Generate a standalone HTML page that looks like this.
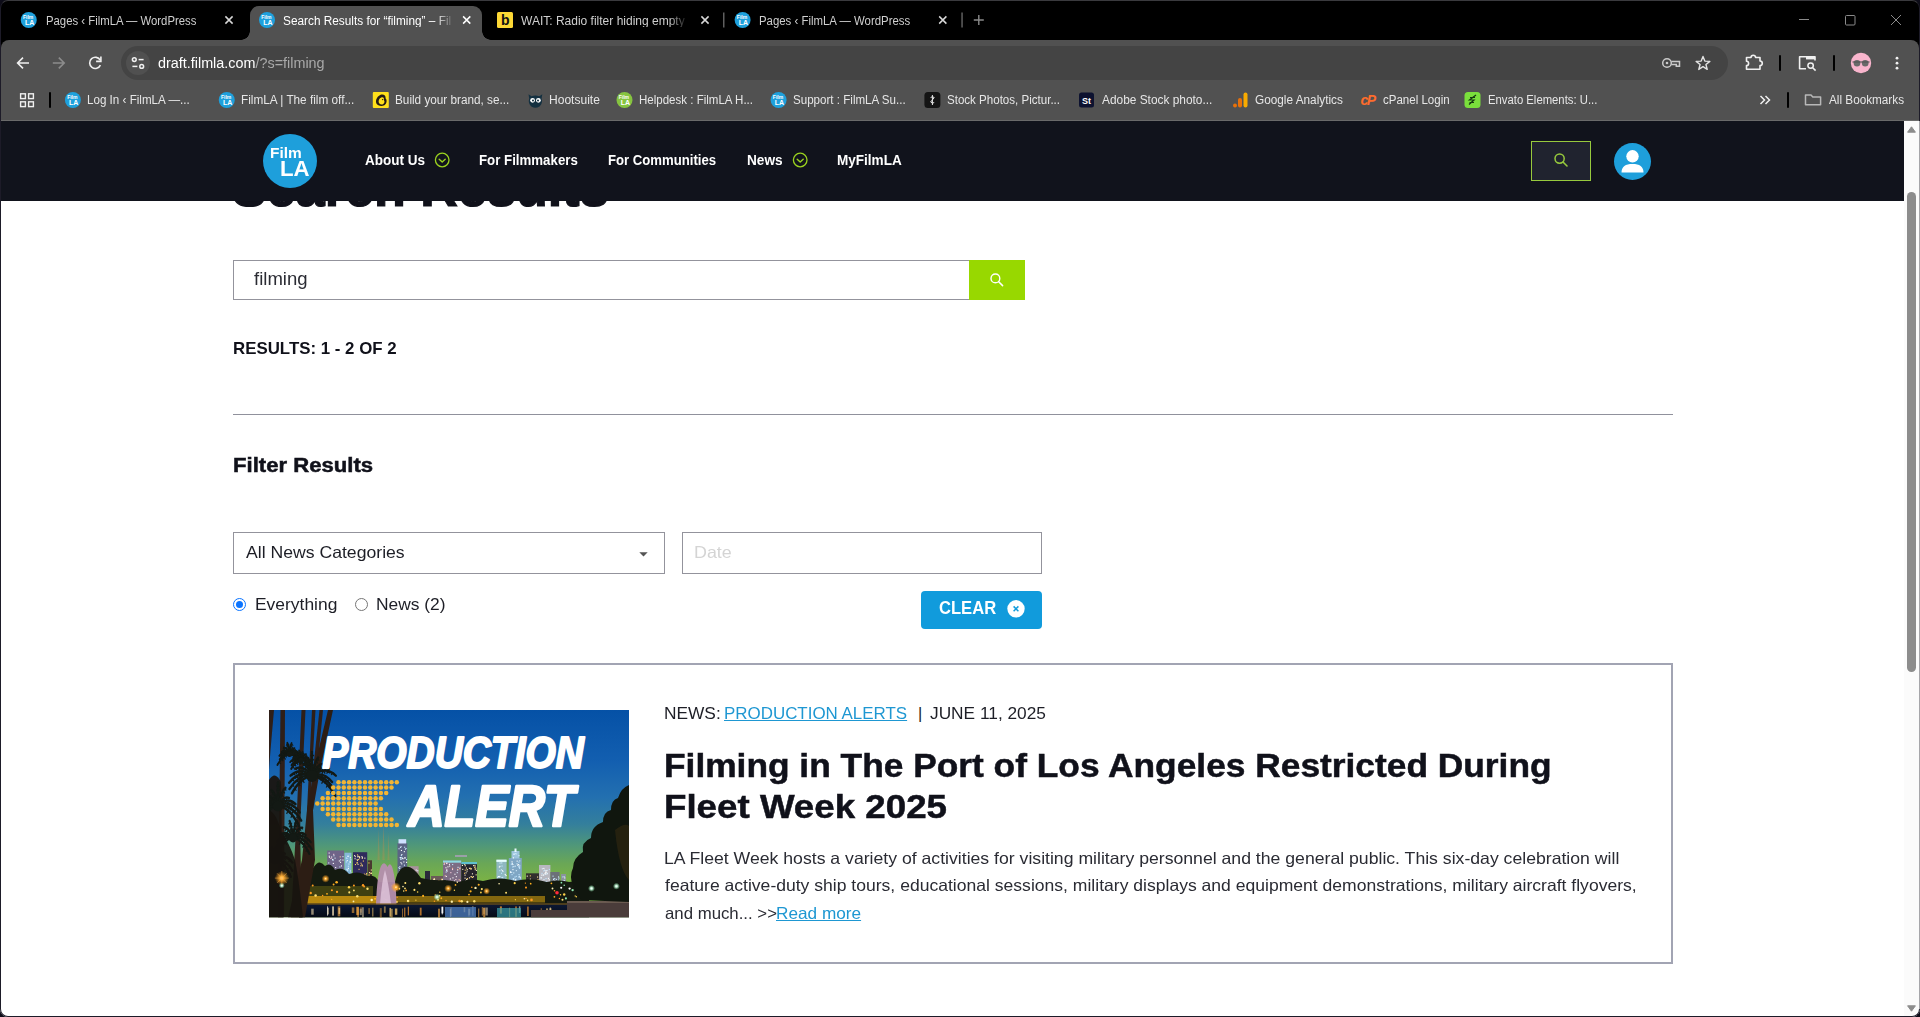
<!DOCTYPE html>
<html lang="en">
<head>
<meta charset="utf-8">
<title>Search Results for "filming" – FilmLA</title>
<style>
*{box-sizing:border-box;margin:0;padding:0}
html,body{width:1920px;height:1017px;overflow:hidden;background:#fff}
body{font-family:"Liberation Sans",sans-serif;position:relative;color:#10111a}
.abs{position:absolute}
.t{position:absolute;white-space:nowrap;line-height:1;transform-origin:0 0;z-index:5}
svg{position:absolute;overflow:visible}
a{color:inherit}
/* ---------- browser chrome ---------- */
#tabstrip{left:0;top:0;width:1920px;height:52px;background:#000}
#toolbar{left:1px;top:40px;width:1918px;height:80px;background:#515151;border-radius:8px 8px 0 0}
#activetab{left:250px;top:6px;width:232px;height:34px;background:#515151;border-radius:9px 9px 0 0}
#activetab:before,#activetab:after{content:"";position:absolute;bottom:0;width:9px;height:9px;background:radial-gradient(circle at 0 0,rgba(0,0,0,0) 8.5px,#515151 9px)}
#activetab:before{left:-9px}
#activetab:after{right:-9px;background:radial-gradient(circle at 100% 0,rgba(0,0,0,0) 8.5px,#515151 9px)}
#omni{left:121px;top:46px;width:1606.5px;height:34px;border-radius:17px;background:#444}
#omnicirc{left:126px;top:51px;width:24px;height:24px;border-radius:12px;background:#505050}
#chromeline{left:0;top:120px;width:1920px;height:1px;background:#6a6a6a}
.sep{position:absolute;width:2px;background:#000;border-radius:1px}
.tsep{position:absolute;width:1px;background:#666}
.fav{position:absolute;width:16px;height:16px;border-radius:8px;background:#1ea0dc}
/* ---------- site ---------- */
#sitehead{left:0;top:121px;width:1904px;height:79.5px;background:#11131c;z-index:2}
#scroll{left:1904px;top:121px;width:15px;height:895px;background:#fbfbfb;z-index:6}
#frame{left:0;top:0;width:1920px;height:1017px;border:1px solid #1d1b28;border-top-color:#3a3a3e;border-radius:8px;box-shadow:0 0 0 12px #0d0c18;z-index:30;pointer-events:none}
#rborder{left:1919px;top:121px;width:1px;height:888px;background:#a6a6aa;z-index:31}
.fade{-webkit-mask-image:linear-gradient(to right,#000 0,#000 90%,rgba(0,0,0,0.15) 100%);mask-image:linear-gradient(to right,#000 0,#000 90%,rgba(0,0,0,0.15) 100%)}
#thumb{left:1907px;top:192px;width:9px;height:480px;border-radius:5px;background:#8c8c8c;z-index:7}
.box{position:absolute;border:1px solid #93939c;background:#fff}
</style>
</head>
<body>
<!-- browser chrome -->
<div class="abs" id="tabstrip"></div>
<div class="abs" id="toolbar"></div>
<div class="abs" id="activetab"></div>
<div class="abs" id="omni"></div>
<div class="abs" id="omnicirc"></div>
<div class="abs" id="chromeline"></div>
<svg style="left:0;top:0;z-index:4" width="1920" height="121" viewBox="0 0 1920 121" font-family="Liberation Sans, sans-serif">
<g><circle cx="28.75" cy="20" r="8" fill="#1ea0dc"/><text x="28.15" y="19.4" font-size="5" font-weight="bold" fill="#fff" text-anchor="middle">Film</text><text x="29.55" y="25.2" font-size="7" font-weight="bold" fill="#fff" text-anchor="middle">LA</text></g>
<g><circle cx="267" cy="20" r="8" fill="#1ea0dc"/><text x="266.4" y="19.4" font-size="5" font-weight="bold" fill="#fff" text-anchor="middle">Film</text><text x="267.8" y="25.2" font-size="7" font-weight="bold" fill="#fff" text-anchor="middle">LA</text></g>
<g><circle cx="742.6" cy="20" r="8" fill="#1ea0dc"/><text x="742.0" y="19.4" font-size="5" font-weight="bold" fill="#fff" text-anchor="middle">Film</text><text x="743.4" y="25.2" font-size="7" font-weight="bold" fill="#fff" text-anchor="middle">LA</text></g>
<rect x="497" y="12" width="16" height="16" rx="1.5" fill="#fdd835"/><text x="505.2" y="25" font-size="14" font-weight="bold" fill="#111" text-anchor="middle">b</text>
<path d="M225.4 16.4 L232.6 23.6 M232.6 16.4 L225.4 23.6" stroke="#d8d8d8" stroke-width="1.5" fill="none"/>
<path d="M463.09999999999997 16.4 L470.3 23.6 M470.3 16.4 L463.09999999999997 23.6" stroke="#fff" stroke-width="1.5" fill="none"/>
<path d="M701.4 16.4 L708.6 23.6 M708.6 16.4 L701.4 23.6" stroke="#d8d8d8" stroke-width="1.5" fill="none"/>
<path d="M939.1999999999999 16.4 L946.4 23.6 M946.4 16.4 L939.1999999999999 23.6" stroke="#d8d8d8" stroke-width="1.5" fill="none"/>
<rect x="723" y="12.5" width="1.5" height="15" fill="#5f5f5f"/><rect x="961.3" y="12.5" width="1.5" height="15" fill="#5f5f5f"/>
<path d="M973.8 20 H983.8 M978.8 15 V25" stroke="#8a8a8a" stroke-width="1.4"/>
<path d="M1799 19.5 H1809" stroke="#8a8a8a" stroke-width="1"/>
<rect x="1845.5" y="15.5" width="9.5" height="9.5" rx="1" fill="none" stroke="#8a8a8a" stroke-width="1"/>
<path d="M1891 15 L1901 25 M1901 15 L1891 25" stroke="#8a8a8a" stroke-width="1"/>
<path d="M29 63 H18 M23 57.6 L17.6 63 L23 68.4" stroke="#f0f0f0" stroke-width="1.6" fill="none" stroke-linejoin="miter"/>
<path d="M52.8 63 H63.8 M58.8 57.6 L64.2 63 L58.8 68.4" stroke="#8c8c8c" stroke-width="1.6" fill="none"/>
<path d="M100.2 60.2 A5.6 5.6 0 1 0 100.4 65.2" stroke="#f0f0f0" stroke-width="1.6" fill="none"/><path d="M100.9 56.6 V61.4 H96.1" stroke="#f0f0f0" stroke-width="1.6" fill="none"/>
<g stroke="#f0f0f0" stroke-width="1.5" fill="none"><circle cx="134.3" cy="59.6" r="1.9"/><path d="M138.6 59.6 H143.6"/><circle cx="141.7" cy="66.4" r="1.9"/><path d="M132.4 66.4 H137.4"/></g>
<g stroke="#c9c9c9" stroke-width="1.5" fill="none"><circle cx="1667" cy="63" r="4.3"/><path d="M1671.3 61.6 H1679.5 V66.2 H1676.3 V64.6 H1671.3"/></g><circle cx="1667" cy="63" r="1.3" fill="#c9c9c9"/>
<polygon points="1703.00,56.40 1704.82,61.09 1709.85,61.38 1705.95,64.56 1707.23,69.42 1703.00,66.70 1698.77,69.42 1700.05,64.56 1696.15,61.38 1701.18,61.09" fill="none" stroke="#e3e3e3" stroke-width="1.4" stroke-linejoin="round"/>
<path d="M1746.5 57.5 H1751 A2.3 2.3 0 0 1 1755.6 57.5 H1760 V61 A2.3 2.3 0 0 1 1760 65.6 V69.3 H1746.5 V65.5 A2.1 2.1 0 0 0 1746.5 61.3 Z" stroke="#f0f0f0" stroke-width="1.6" fill="none" stroke-linejoin="round"/>
<rect x="1779" y="55" width="2" height="16" rx="1" fill="#000"/><rect x="1833" y="55" width="2" height="16" rx="1" fill="#000"/>
<path d="M1806 68.8 H1799.6 V56.8 H1815 V60.5" stroke="#f0f0f0" stroke-width="1.6" fill="none" stroke-linejoin="round"/><rect x="1806" y="56.4" width="9" height="3" fill="#f0f0f0"/><circle cx="1810.6" cy="65.6" r="2.7" stroke="#f0f0f0" stroke-width="1.5" fill="none"/><path d="M1812.7 67.7 L1815.6 70.6" stroke="#f0f0f0" stroke-width="1.6"/>
<circle cx="1861" cy="63" r="10.2" fill="#f9b5cd"/><circle cx="1857" cy="63.3" r="3.3" fill="#6a6a6a"/><circle cx="1865.2" cy="63.3" r="3.3" fill="#6a6a6a"/><path d="M1852.5 62 H1869.5" stroke="#555" stroke-width="1.2"/>
<circle cx="1897" cy="58.2" r="1.4" fill="#f0f0f0"/><circle cx="1897" cy="63.2" r="1.4" fill="#f0f0f0"/><circle cx="1897" cy="68.2" r="1.4" fill="#f0f0f0"/>
<g stroke="#f0f0f0" stroke-width="1.4" fill="none"><rect x="20.6" y="93.8" width="4.8" height="4.8"/><rect x="28.6" y="93.8" width="4.8" height="4.8"/><rect x="20.6" y="101.8" width="4.8" height="4.8"/><rect x="28.6" y="101.8" width="4.8" height="4.8"/></g>
<rect x="49" y="92" width="2" height="16" rx="1" fill="#000"/><rect x="1787" y="92" width="2" height="16" rx="1" fill="#000"/>
<g><circle cx="72.9" cy="100" r="8" fill="#1ea0dc"/><text x="72.30000000000001" y="99.4" font-size="5" font-weight="bold" fill="#fff" text-anchor="middle">Film</text><text x="73.7" y="105.2" font-size="7" font-weight="bold" fill="#fff" text-anchor="middle">LA</text></g>
<g><circle cx="226.75" cy="100" r="8" fill="#1ea0dc"/><text x="226.15" y="99.4" font-size="5" font-weight="bold" fill="#fff" text-anchor="middle">Film</text><text x="227.55" y="105.2" font-size="7" font-weight="bold" fill="#fff" text-anchor="middle">LA</text></g>
<g><circle cx="624.5" cy="100" r="8" fill="#86c440"/><text x="623.9" y="99.4" font-size="5" font-weight="bold" fill="#fff" text-anchor="middle">Film</text><text x="625.3" y="105.2" font-size="7" font-weight="bold" fill="#fff" text-anchor="middle">LA</text></g>
<g><circle cx="778.6" cy="100" r="8" fill="#1ea0dc"/><text x="778.0" y="99.4" font-size="5" font-weight="bold" fill="#fff" text-anchor="middle">Film</text><text x="779.4" y="105.2" font-size="7" font-weight="bold" fill="#fff" text-anchor="middle">LA</text></g>
<rect x="372.8" y="92" width="16" height="16" rx="1" fill="#ffe01b"/><path d="M377.2 104.6 C374.8 102.4 376 96.8 380.6 94.8 C383.6 93.8 386 95.6 385.6 98.4 C387.2 99.6 387 103.6 384.4 105.2 C382.2 106.4 378.8 106.2 377.2 104.6 Z" fill="#241c15"/><path d="M379.4 103.6 C377.8 101.6 379 98 381.8 97.2 C383.6 97 384.4 98.4 383.8 100 C385 101 384.6 103.4 383 104.2 C381.8 104.8 380.2 104.6 379.4 103.6 Z" fill="#ffe01b"/><circle cx="382.6" cy="99.6" r="0.7" fill="#241c15"/>
<path d="M528.5 94.2 L531.5 96.2 Q535.4 94.6 539.3 96.2 L542.3 94.2 L541.6 98.5 Q543 103 539.5 106.5 Q535.4 109 531.3 106.5 Q527.8 103 529.2 98.5 Z" fill="#143040"/><circle cx="532.6" cy="100.3" r="2.4" fill="#fff"/><circle cx="538.4" cy="100.3" r="2.4" fill="#fff"/><circle cx="533" cy="100.5" r="1" fill="#143040"/><circle cx="538" cy="100.5" r="1" fill="#143040"/>
<rect x="924.4" y="92" width="16" height="16" rx="3.5" fill="#141414"/><path d="M932.4 95 V105 M930.6 97.5 Q932.4 96 934.2 97.5 Q932.4 100 930.6 102 Q932.4 104 934.2 102.5" stroke="#e8e8e8" stroke-width="1" fill="none"/>
<rect x="1079" y="92.5" width="15" height="15" rx="2.5" fill="#0d1230"/><text x="1086.5" y="103.6" font-size="9" font-weight="bold" fill="#fff" text-anchor="middle">St</text>
<rect x="1243.5" y="92.5" width="4" height="15" rx="2" fill="#f9ab00"/><rect x="1238" y="98" width="4" height="9.5" rx="2" fill="#e8710a"/><circle cx="1235" cy="105.5" r="2" fill="#e8710a"/>
<text x="1367.5" y="105" font-size="14" font-weight="bold" font-style="italic" fill="#ff6c2c" text-anchor="middle" letter-spacing="-1.5">cP</text>
<rect x="1464.5" y="92" width="16" height="16" rx="3.5" fill="#7adf3c"/><path d="M1476 95 L1469.5 100 H1474 L1469 104.5 M1470 97.5 H1475 M1469.5 102.5 H1474" stroke="#143a10" stroke-width="1.2" fill="none"/>
<path d="M1760.5 96 L1764.5 100 L1760.5 104 M1765.5 96 L1769.5 100 L1765.5 104" stroke="#f0f0f0" stroke-width="1.5" fill="none"/>
<path d="M1805.5 104.8 V95 H1811 L1812.8 97 H1820.6 V104.8 Z" stroke="#b8b8b8" stroke-width="1.5" fill="none" stroke-linejoin="round"/>
</svg>
<span class="t" style="left:45.70px;top:15px;font-size:12px;color:#cfcfcf;transform:scaleX(0.9451);">Pages ‹ FilmLA — WordPress</span>
<span class="t fade" style="left:282.50px;top:15px;font-size:12px;color:#fff;transform:scaleX(0.9850);">Search Results for “filming” – Fil</span>
<span class="t fade" style="left:521.30px;top:15px;font-size:12px;color:#cfcfcf;transform:scaleX(1.0005);">WAIT: Radio filter hiding empty</span>
<span class="t" style="left:759.00px;top:15px;font-size:12px;color:#cfcfcf;transform:scaleX(0.9498);">Pages ‹ FilmLA — WordPress</span>
<span class="t" style="left:158.00px;top:56px;font-size:14px;color:#fff;transform:scaleX(1.0268);">draft.filmla.com<span style="color:#a9a9a9">/?s=filming</span></span>
<span class="t" style="left:87.00px;top:94px;font-size:12px;color:#e6e6e6;transform:scaleX(0.9684);">Log In ‹ FilmLA —...</span>
<span class="t" style="left:241.25px;top:94px;font-size:12px;color:#e6e6e6;transform:scaleX(0.9813);">FilmLA | The film off...</span>
<span class="t" style="left:395.00px;top:94px;font-size:12px;color:#e6e6e6;transform:scaleX(0.9794);">Build your brand, se...</span>
<span class="t" style="left:549.40px;top:94px;font-size:12px;color:#e6e6e6;transform:scaleX(1.0035);">Hootsuite</span>
<span class="t" style="left:639.00px;top:94px;font-size:12px;color:#e6e6e6;transform:scaleX(0.9602);">Helpdesk : FilmLA H...</span>
<span class="t" style="left:792.70px;top:94px;font-size:12px;color:#e6e6e6;transform:scaleX(0.9654);">Support : FilmLA Su...</span>
<span class="t" style="left:947.30px;top:94px;font-size:12px;color:#e6e6e6;transform:scaleX(0.9628);">Stock Photos, Pictur...</span>
<span class="t" style="left:1101.50px;top:94px;font-size:12px;color:#e6e6e6;transform:scaleX(0.9903);">Adobe Stock photo...</span>
<span class="t" style="left:1255.00px;top:94px;font-size:12px;color:#e6e6e6;transform:scaleX(0.9828);">Google Analytics</span>
<span class="t" style="left:1382.50px;top:94px;font-size:12px;color:#e6e6e6;transform:scaleX(0.9605);">cPanel Login</span>
<span class="t" style="left:1487.50px;top:94px;font-size:12px;color:#e6e6e6;transform:scaleX(0.9420);">Envato Elements: U...</span>
<span class="t" style="left:1829.00px;top:94px;font-size:12px;color:#e6e6e6;transform:scaleX(0.9780);">All Bookmarks</span>

<!-- page -->
<div class="abs" id="sitehead"></div>
<!-- logo -->
<div class="abs" style="left:262.9px;top:133.9px;width:54.2px;height:54.2px;border-radius:50%;background:#1e9fdb;z-index:3"></div>
<!-- nav chevrons -->
<svg style="left:434px;top:152px;z-index:3" width="16" height="16" viewBox="0 0 16 16"><circle cx="8.2" cy="8" r="6.8" fill="none" stroke="#9bd21f" stroke-width="1.3"/><path d="M5.2 7.2 L8.2 10 L11.2 7.2" fill="none" stroke="#9bd21f" stroke-width="1.4" stroke-linecap="round" stroke-linejoin="round"/></svg>
<svg style="left:792px;top:152px;z-index:3" width="16" height="16" viewBox="0 0 16 16"><circle cx="8.2" cy="8" r="6.8" fill="none" stroke="#9bd21f" stroke-width="1.3"/><path d="M5.2 7.2 L8.2 10 L11.2 7.2" fill="none" stroke="#9bd21f" stroke-width="1.4" stroke-linecap="round" stroke-linejoin="round"/></svg>
<!-- header search button -->
<div class="abs" style="left:1531px;top:141px;width:60px;height:40px;border:1px solid #97c93d;background:#20232f;z-index:3"></div>
<svg style="left:1553px;top:152px;z-index:4" width="16" height="16" viewBox="0 0 16 16"><circle cx="6.6" cy="6.6" r="4.6" fill="none" stroke="#97c93d" stroke-width="1.5"/><path d="M10 10 L14 14" stroke="#97c93d" stroke-width="1.6" stroke-linecap="round"/></svg>
<!-- user icon -->
<div class="abs" style="left:1613.5px;top:142.5px;width:37px;height:37px;border-radius:50%;background:#1e9fdb;z-index:3;overflow:hidden"></div>
<svg style="left:1613.5px;top:142.5px;z-index:4" width="37" height="37" viewBox="0 0 37 37"><circle cx="18.5" cy="13.3" r="6.2" fill="#fff"/><path d="M7.5 29.5 C7.5 23.5 11.5 21 18.5 21 C25.5 21 29.5 23.5 29.5 29.5 Z" fill="#fff"/></svg>
<!-- scrollbar -->
<div class="abs" id="scroll"></div>
<div class="abs" id="thumb"></div>
<svg style="left:1904px;top:121px;z-index:7" width="15" height="895" viewBox="0 0 15 895"><path d="M3.6 11.2 L7.5 5.8 L11.4 11.2 Z" fill="#8c8c8c" stroke="#8c8c8c" stroke-width="1" stroke-linejoin="round"/><path d="M3.6 884.8 L7.5 890.2 L11.4 884.8 Z" fill="#8c8c8c" stroke="#8c8c8c" stroke-width="1" stroke-linejoin="round"/></svg>
<div class="abs" id="rborder"></div>
<div class="abs" id="frame"></div>
<!-- search form -->
<div class="box" style="left:233px;top:260px;width:737px;height:40px"></div>
<div class="abs" style="left:969px;top:260px;width:56px;height:40px;background:#98d800"></div>
<svg style="left:989px;top:272px" width="16" height="16" viewBox="0 0 16 16"><circle cx="6.4" cy="6.4" r="4.4" fill="none" stroke="#fff" stroke-width="1.4"/><path d="M9.7 9.7 L13.6 13.6" stroke="#fff" stroke-width="1.5" stroke-linecap="round"/></svg>
<div class="abs" style="left:233px;top:414px;width:1440px;height:1px;background:#90919c"></div>
<!-- filters -->
<div class="box" style="left:233px;top:532px;width:432px;height:42px"></div>
<svg style="left:639px;top:552px" width="9" height="5" viewBox="0 0 9 5"><path d="M0.3 0.3 L8.7 0.3 L4.5 4.6 Z" fill="#555"/></svg>
<div class="box" style="left:682px;top:532px;width:360px;height:42px"></div>
<!-- radios -->
<div class="abs" style="left:232.5px;top:598px;width:13px;height:13px;border-radius:50%;border:1.2px solid #0b74ff;background:#fff"></div>
<div class="abs" style="left:235.5px;top:601px;width:7px;height:7px;border-radius:50%;background:#0b74ff"></div>
<div class="abs" style="left:354.7px;top:598px;width:13px;height:13px;border-radius:50%;border:1.2px solid #767676;background:#fff"></div>
<!-- clear -->
<div class="abs" style="left:921px;top:591px;width:121px;height:38px;border-radius:4px;background:#119bdc"></div>
<svg style="left:1006.5px;top:600px" width="18" height="18" viewBox="0 0 18 18"><circle cx="9" cy="8.8" r="8.7" fill="#fff"/><path d="M6.6 6.4 L11.4 11.2 M11.4 6.4 L6.6 11.2" stroke="#119bdc" stroke-width="1.5"/></svg>
<!-- card -->
<div class="abs" style="left:233px;top:663px;width:1440px;height:301px;border:2px solid #a2a4b3;background:#fff"></div>
<svg style="left:269px;top:710px" width="360" height="207.5" viewBox="0 0 360 207.5" font-family="Liberation Sans, sans-serif">
<defs>
<linearGradient id="sky" x1="0" y1="0" x2="0" y2="1">
<stop offset="0" stop-color="#0551a6"/><stop offset="0.25" stop-color="#135fb0"/><stop offset="0.42" stop-color="#2370b0"/>
<stop offset="0.55" stop-color="#347f9c"/><stop offset="0.65" stop-color="#4f977a"/><stop offset="0.74" stop-color="#6aa756"/><stop offset="0.82" stop-color="#7ab246"/><stop offset="1" stop-color="#7ab246"/></linearGradient>
<linearGradient id="water" x1="0" y1="0" x2="0" y2="1"><stop offset="0" stop-color="#0c1833"/><stop offset="1" stop-color="#050a14"/></linearGradient>
<radialGradient id="glowO"><stop offset="0" stop-color="#fff4d0"/><stop offset="0.25" stop-color="#ffb23a"/><stop offset="1" stop-color="#ff9a1a" stop-opacity="0"/></radialGradient>
<radialGradient id="glowW"><stop offset="0" stop-color="#ffffff"/><stop offset="0.3" stop-color="#c8f0d8"/><stop offset="1" stop-color="#7fe0a0" stop-opacity="0"/></radialGradient>
<clipPath id="imgclip"><rect width="360" height="207.5"/></clipPath>
</defs>
<g clip-path="url(#imgclip)">
<rect width="360" height="207.5" fill="url(#sky)"/>
<rect x="58.2" y="140.5" width="16.8" height="49.5" fill="#6f6488"/>
<rect x="63.7" y="149.5" width="1.1" height="1.1" fill="#bfe6ff"/>
<rect x="59.5" y="180.7" width="1.1" height="1.1" fill="#ffd0e0"/>
<rect x="64.4" y="145.2" width="1.1" height="1.1" fill="#d8f0ff"/>
<rect x="62.1" y="146.5" width="1.1" height="1.1" fill="#ffffff"/>
<rect x="59.9" y="146.7" width="1.1" height="1.1" fill="#ffffff"/>
<rect x="59.7" y="168.8" width="1.1" height="1.1" fill="#fff"/>
<rect x="68.4" y="169.6" width="1.1" height="1.1" fill="#ffd0e0"/>
<rect x="67.6" y="160.9" width="1.1" height="1.1" fill="#fff"/>
<rect x="59.5" y="182.4" width="1.1" height="1.1" fill="#ffc0a0"/>
<rect x="65.2" y="167.6" width="1.1" height="1.1" fill="#d8f0ff"/>
<rect x="63.5" y="180.4" width="1.1" height="1.1" fill="#fff"/>
<rect x="60.4" y="169.1" width="1.1" height="1.1" fill="#fff"/>
<rect x="64.5" y="168.0" width="1.1" height="1.1" fill="#ffd0e0"/>
<rect x="67.4" y="171.3" width="1.1" height="1.1" fill="#ffffff"/>
<rect x="69.1" y="162.4" width="1.1" height="1.1" fill="#ffc0a0"/>
<rect x="65.9" y="185.4" width="1.1" height="1.1" fill="#ffc0a0"/>
<rect x="63.4" y="179.4" width="1.1" height="1.1" fill="#bfe6ff"/>
<rect x="70.7" y="146.3" width="1.1" height="1.1" fill="#ffc0a0"/>
<rect x="66.8" y="183.2" width="1.1" height="1.1" fill="#bfe6ff"/>
<rect x="65.6" y="170.8" width="1.1" height="1.1" fill="#ffd0e0"/>
<rect x="60.6" y="161.9" width="1.1" height="1.1" fill="#ffc0a0"/>
<rect x="61.1" y="165.2" width="1.1" height="1.1" fill="#ffd0e0"/>
<rect x="73.4" y="146.1" width="1.1" height="1.1" fill="#d8f0ff"/>
<rect x="67.5" y="183.2" width="1.1" height="1.1" fill="#ffc0a0"/>
<rect x="64.0" y="158.8" width="1.1" height="1.1" fill="#ffffff"/>
<rect x="67.6" y="163.7" width="1.1" height="1.1" fill="#ffd0e0"/>
<rect x="73.2" y="164.5" width="1.1" height="1.1" fill="#bfe6ff"/>
<rect x="59.8" y="176.5" width="1.1" height="1.1" fill="#ffc0a0"/>
<rect x="68.6" y="188.7" width="1.1" height="1.1" fill="#ffffff"/>
<rect x="63.1" y="160.4" width="1.1" height="1.1" fill="#bfe6ff"/>
<rect x="64.1" y="186.2" width="1.1" height="1.1" fill="#ffc0a0"/>
<rect x="61.4" y="147.9" width="1.1" height="1.1" fill="#ffd0e0"/>
<rect x="62.1" y="155.9" width="1.1" height="1.1" fill="#bfe6ff"/>
<rect x="62.6" y="160.7" width="1.1" height="1.1" fill="#ffffff"/>
<rect x="60.0" y="163.4" width="1.1" height="1.1" fill="#d8f0ff"/>
<rect x="63.0" y="148.9" width="1.1" height="1.1" fill="#ffffff"/>
<rect x="71.9" y="155.4" width="1.1" height="1.1" fill="#ffffff"/>
<rect x="73.8" y="174.2" width="1.1" height="1.1" fill="#ffffff"/>
<rect x="73.4" y="149.5" width="1.1" height="1.1" fill="#fff"/>
<rect x="61.1" y="173.1" width="1.1" height="1.1" fill="#ffd0e0"/>
<rect x="66.2" y="169.9" width="1.1" height="1.1" fill="#ffc0a0"/>
<rect x="63.1" y="149.3" width="1.1" height="1.1" fill="#d8f0ff"/>
<rect x="64.4" y="168.8" width="1.1" height="1.1" fill="#fff"/>
<rect x="69.3" y="166.5" width="1.1" height="1.1" fill="#d8f0ff"/>
<rect x="68.8" y="176.9" width="1.1" height="1.1" fill="#ffffff"/>
<rect x="72.5" y="178.8" width="1.1" height="1.1" fill="#bfe6ff"/>
<rect x="70.9" y="160.7" width="1.1" height="1.1" fill="#ffffff"/>
<rect x="64.8" y="164.9" width="1.1" height="1.1" fill="#ffffff"/>
<rect x="59.7" y="145.6" width="1.1" height="1.1" fill="#fff"/>
<rect x="65.5" y="147.6" width="1.1" height="1.1" fill="#d8f0ff"/>
<rect x="59.6" y="142.5" width="1.1" height="1.1" fill="#fff"/>
<rect x="67.0" y="186.6" width="1.1" height="1.1" fill="#d8f0ff"/>
<rect x="59.2" y="183.2" width="1.1" height="1.1" fill="#d8f0ff"/>
<rect x="64.5" y="172.0" width="1.1" height="1.1" fill="#ffc0a0"/>
<rect x="68.0" y="164.5" width="1.1" height="1.1" fill="#ffd0e0"/>
<rect x="71.7" y="188.7" width="1.1" height="1.1" fill="#ffffff"/>
<rect x="66.1" y="157.0" width="1.1" height="1.1" fill="#fff"/>
<rect x="60.4" y="158.4" width="1.1" height="1.1" fill="#ffc0a0"/>
<rect x="66.1" y="174.7" width="1.1" height="1.1" fill="#d8f0ff"/>
<rect x="59.2" y="186.7" width="1.1" height="1.1" fill="#d8f0ff"/>
<rect x="64.3" y="174.6" width="1.1" height="1.1" fill="#ffd0e0"/>
<rect x="70.3" y="156.4" width="1.1" height="1.1" fill="#bfe6ff"/>
<rect x="71.9" y="174.9" width="1.1" height="1.1" fill="#ffc0a0"/>
<rect x="66.7" y="184.7" width="1.1" height="1.1" fill="#ffc0a0"/>
<rect x="70.5" y="167.3" width="1.1" height="1.1" fill="#d8f0ff"/>
<rect x="63.8" y="152.9" width="1.1" height="1.1" fill="#fff"/>
<rect x="71.1" y="180.6" width="1.1" height="1.1" fill="#bfe6ff"/>
<rect x="71.0" y="151.8" width="1.1" height="1.1" fill="#ffffff"/>
<rect x="64.2" y="143.8" width="1.1" height="1.1" fill="#ffd0e0"/>
<rect x="70.8" y="164.5" width="1.1" height="1.1" fill="#fff"/>
<rect x="69.3" y="187.0" width="1.1" height="1.1" fill="#ffffff"/>
<rect x="71.1" y="176.1" width="1.1" height="1.1" fill="#ffc0a0"/>
<rect x="73.3" y="159.5" width="1.1" height="1.1" fill="#fff"/>
<rect x="60.4" y="164.4" width="1.1" height="1.1" fill="#ffc0a0"/>
<rect x="61.9" y="171.5" width="1.1" height="1.1" fill="#d8f0ff"/>
<rect x="71.6" y="164.8" width="1.1" height="1.1" fill="#bfe6ff"/>
<rect x="64.0" y="172.4" width="1.1" height="1.1" fill="#bfe6ff"/>
<rect x="60.6" y="160.6" width="1.1" height="1.1" fill="#bfe6ff"/>
<rect x="70.2" y="164.7" width="1.1" height="1.1" fill="#fff"/>
<rect x="65.4" y="172.1" width="1.1" height="1.1" fill="#ffd0e0"/>
<rect x="71.0" y="187.7" width="1.1" height="1.1" fill="#ffffff"/>
<rect x="65.8" y="177.1" width="1.1" height="1.1" fill="#ffd0e0"/>
<rect x="69.8" y="150.4" width="1.1" height="1.1" fill="#fff"/>
<rect x="59.2" y="170.0" width="1.1" height="1.1" fill="#ffffff"/>
<rect x="71.1" y="149.3" width="1.1" height="1.1" fill="#d8f0ff"/>
<rect x="73.7" y="173.1" width="1.1" height="1.1" fill="#ffc0a0"/>
<rect x="61.2" y="168.0" width="1.1" height="1.1" fill="#ffd0e0"/>
<rect x="59.0" y="187.6" width="1.1" height="1.1" fill="#bfe6ff"/>
<rect x="60.4" y="177.4" width="1.1" height="1.1" fill="#fff"/>
<rect x="65.4" y="183.0" width="1.1" height="1.1" fill="#fff"/>
<rect x="59.2" y="152.4" width="1.1" height="1.1" fill="#d8f0ff"/>
<rect x="62.5" y="169.8" width="1.1" height="1.1" fill="#ffc0a0"/>
<rect x="75.5" y="142.7" width="7.0" height="47.3" fill="#86b7d8"/>
<rect x="79.0" y="181.7" width="1.1" height="1.1" fill="#ffffff"/>
<rect x="81.0" y="160.4" width="1.1" height="1.1" fill="#d8f0ff"/>
<rect x="79.7" y="180.8" width="1.1" height="1.1" fill="#bfe6ff"/>
<rect x="78.4" y="185.4" width="1.1" height="1.1" fill="#bfe6ff"/>
<rect x="76.8" y="151.4" width="1.1" height="1.1" fill="#bfe6ff"/>
<rect x="76.2" y="164.2" width="1.1" height="1.1" fill="#ffffff"/>
<rect x="79.4" y="179.1" width="1.1" height="1.1" fill="#ffffff"/>
<rect x="77.0" y="165.7" width="1.1" height="1.1" fill="#bfe6ff"/>
<rect x="76.7" y="147.4" width="1.1" height="1.1" fill="#bfe6ff"/>
<rect x="78.9" y="169.3" width="1.1" height="1.1" fill="#ffffff"/>
<rect x="80.9" y="147.2" width="1.1" height="1.1" fill="#ffffff"/>
<rect x="77.6" y="178.9" width="1.1" height="1.1" fill="#bfe6ff"/>
<rect x="78.5" y="145.9" width="1.1" height="1.1" fill="#ffffff"/>
<rect x="78.5" y="171.8" width="1.1" height="1.1" fill="#bfe6ff"/>
<rect x="79.4" y="153.5" width="1.1" height="1.1" fill="#d8f0ff"/>
<rect x="78.5" y="168.3" width="1.1" height="1.1" fill="#d8f0ff"/>
<rect x="78.8" y="155.7" width="1.1" height="1.1" fill="#bfe6ff"/>
<rect x="80.8" y="186.4" width="1.1" height="1.1" fill="#d8f0ff"/>
<rect x="81.1" y="184.2" width="1.1" height="1.1" fill="#ffffff"/>
<rect x="80.6" y="150.8" width="1.1" height="1.1" fill="#ffffff"/>
<rect x="78.2" y="158.7" width="1.1" height="1.1" fill="#bfe6ff"/>
<rect x="77.4" y="147.9" width="1.1" height="1.1" fill="#bfe6ff"/>
<rect x="77.7" y="150.1" width="1.1" height="1.1" fill="#ffffff"/>
<rect x="81.2" y="173.2" width="1.1" height="1.1" fill="#d8f0ff"/>
<rect x="76.9" y="183.8" width="1.1" height="1.1" fill="#d8f0ff"/>
<rect x="77.3" y="186.9" width="1.1" height="1.1" fill="#d8f0ff"/>
<rect x="80.9" y="151.9" width="1.1" height="1.1" fill="#bfe6ff"/>
<rect x="80.6" y="151.9" width="1.1" height="1.1" fill="#d8f0ff"/>
<rect x="81.5" y="162.6" width="1.1" height="1.1" fill="#d8f0ff"/>
<rect x="77.2" y="158.8" width="1.1" height="1.1" fill="#bfe6ff"/>
<rect x="78.1" y="159.7" width="1.1" height="1.1" fill="#d8f0ff"/>
<rect x="78.5" y="145.5" width="1.1" height="1.1" fill="#d8f0ff"/>
<rect x="78.9" y="157.8" width="1.1" height="1.1" fill="#ffffff"/>
<rect x="76.7" y="185.4" width="1.1" height="1.1" fill="#ffffff"/>
<rect x="81.3" y="149.3" width="1.1" height="1.1" fill="#d8f0ff"/>
<rect x="77.6" y="184.8" width="1.1" height="1.1" fill="#ffffff"/>
<rect x="84.0" y="142.2" width="14.2" height="47.8" fill="#2f2a5c"/>
<rect x="88.0" y="150.0" width="1.1" height="1.1" fill="#ffd060"/>
<rect x="95.3" y="174.5" width="1.1" height="1.1" fill="#ffd060"/>
<rect x="89.7" y="168.2" width="1.1" height="1.1" fill="#fff6d8"/>
<rect x="91.8" y="175.6" width="1.1" height="1.1" fill="#ffe9a0"/>
<rect x="88.1" y="180.0" width="1.1" height="1.1" fill="#ffe9a0"/>
<rect x="90.0" y="147.4" width="1.1" height="1.1" fill="#ffe9a0"/>
<rect x="92.6" y="180.1" width="1.1" height="1.1" fill="#ffe9a0"/>
<rect x="92.3" y="154.2" width="1.1" height="1.1" fill="#ffd060"/>
<rect x="95.5" y="164.5" width="1.1" height="1.1" fill="#ffd060"/>
<rect x="97.1" y="162.9" width="1.1" height="1.1" fill="#ffd060"/>
<rect x="92.4" y="146.1" width="1.1" height="1.1" fill="#fff6d8"/>
<rect x="87.6" y="149.1" width="1.1" height="1.1" fill="#ffe9a0"/>
<rect x="87.9" y="152.3" width="1.1" height="1.1" fill="#ffd060"/>
<rect x="92.5" y="168.0" width="1.1" height="1.1" fill="#ffe9a0"/>
<rect x="88.3" y="166.6" width="1.1" height="1.1" fill="#ffe9a0"/>
<rect x="88.0" y="180.2" width="1.1" height="1.1" fill="#ffd060"/>
<rect x="85.1" y="145.0" width="1.1" height="1.1" fill="#fff6d8"/>
<rect x="91.5" y="152.7" width="1.1" height="1.1" fill="#ffd060"/>
<rect x="87.7" y="164.2" width="1.1" height="1.1" fill="#fff6d8"/>
<rect x="94.9" y="163.6" width="1.1" height="1.1" fill="#ffd060"/>
<rect x="91.5" y="184.0" width="1.1" height="1.1" fill="#fff6d8"/>
<rect x="88.5" y="153.8" width="1.1" height="1.1" fill="#ffe9a0"/>
<rect x="88.9" y="181.5" width="1.1" height="1.1" fill="#fff6d8"/>
<rect x="93.8" y="150.5" width="1.1" height="1.1" fill="#ffd060"/>
<rect x="97.0" y="181.7" width="1.1" height="1.1" fill="#ffe9a0"/>
<rect x="85.5" y="177.4" width="1.1" height="1.1" fill="#ffd060"/>
<rect x="90.0" y="146.7" width="1.1" height="1.1" fill="#fff6d8"/>
<rect x="95.2" y="183.2" width="1.1" height="1.1" fill="#fff6d8"/>
<rect x="96.8" y="171.0" width="1.1" height="1.1" fill="#fff6d8"/>
<rect x="88.3" y="164.8" width="1.1" height="1.1" fill="#ffe9a0"/>
<rect x="88.0" y="144.4" width="1.1" height="1.1" fill="#ffd060"/>
<rect x="96.7" y="187.8" width="1.1" height="1.1" fill="#fff6d8"/>
<rect x="88.7" y="145.7" width="1.1" height="1.1" fill="#ffd060"/>
<rect x="87.3" y="152.4" width="1.1" height="1.1" fill="#ffd060"/>
<rect x="89.4" y="165.5" width="1.1" height="1.1" fill="#fff6d8"/>
<rect x="92.9" y="155.3" width="1.1" height="1.1" fill="#ffe9a0"/>
<rect x="85.7" y="180.8" width="1.1" height="1.1" fill="#ffe9a0"/>
<rect x="89.6" y="146.1" width="1.1" height="1.1" fill="#ffe9a0"/>
<rect x="88.4" y="172.4" width="1.1" height="1.1" fill="#ffe9a0"/>
<rect x="92.0" y="167.9" width="1.1" height="1.1" fill="#ffe9a0"/>
<rect x="92.9" y="176.3" width="1.1" height="1.1" fill="#fff6d8"/>
<rect x="89.5" y="158.8" width="1.1" height="1.1" fill="#ffd060"/>
<rect x="86.5" y="176.6" width="1.1" height="1.1" fill="#fff6d8"/>
<rect x="86.4" y="181.2" width="1.1" height="1.1" fill="#fff6d8"/>
<rect x="95.8" y="172.3" width="1.1" height="1.1" fill="#fff6d8"/>
<rect x="93.4" y="166.8" width="1.1" height="1.1" fill="#fff6d8"/>
<rect x="94.1" y="169.7" width="1.1" height="1.1" fill="#ffe9a0"/>
<rect x="95.0" y="170.4" width="1.1" height="1.1" fill="#fff6d8"/>
<rect x="93.2" y="175.3" width="1.1" height="1.1" fill="#ffe9a0"/>
<rect x="85.7" y="146.1" width="1.1" height="1.1" fill="#fff6d8"/>
<rect x="89.1" y="148.9" width="1.1" height="1.1" fill="#ffd060"/>
<rect x="91.6" y="172.3" width="1.1" height="1.1" fill="#fff6d8"/>
<rect x="91.3" y="155.2" width="1.1" height="1.1" fill="#ffd060"/>
<rect x="84.6" y="179.9" width="1.1" height="1.1" fill="#fff6d8"/>
<rect x="96.3" y="184.4" width="1.1" height="1.1" fill="#ffe9a0"/>
<rect x="92.9" y="147.2" width="1.1" height="1.1" fill="#fff6d8"/>
<rect x="90.6" y="180.5" width="1.1" height="1.1" fill="#ffd060"/>
<rect x="87.6" y="178.1" width="1.1" height="1.1" fill="#ffe9a0"/>
<rect x="93.9" y="187.9" width="1.1" height="1.1" fill="#ffd060"/>
<rect x="95.3" y="147.6" width="1.1" height="1.1" fill="#fff6d8"/>
<rect x="88.2" y="146.3" width="1.1" height="1.1" fill="#fff6d8"/>
<rect x="92.7" y="147.7" width="1.1" height="1.1" fill="#ffe9a0"/>
<rect x="88.8" y="173.4" width="1.1" height="1.1" fill="#fff6d8"/>
<rect x="88.4" y="169.6" width="1.1" height="1.1" fill="#ffe9a0"/>
<rect x="90.7" y="166.0" width="1.1" height="1.1" fill="#fff6d8"/>
<rect x="85.9" y="154.0" width="1.1" height="1.1" fill="#ffd060"/>
<rect x="88.3" y="167.3" width="1.1" height="1.1" fill="#ffd060"/>
<rect x="90.5" y="178.6" width="1.1" height="1.1" fill="#fff6d8"/>
<rect x="87.1" y="188.0" width="1.1" height="1.1" fill="#ffd060"/>
<rect x="84.8" y="164.8" width="1.1" height="1.1" fill="#fff6d8"/>
<rect x="96.8" y="164.3" width="1.1" height="1.1" fill="#ffd060"/>
<rect x="89.5" y="185.3" width="1.1" height="1.1" fill="#ffe9a0"/>
<rect x="85.5" y="148.2" width="1.1" height="1.1" fill="#fff6d8"/>
<rect x="91.2" y="186.9" width="1.1" height="1.1" fill="#ffe9a0"/>
<rect x="92.2" y="172.5" width="1.1" height="1.1" fill="#ffd060"/>
<rect x="98.7" y="150.3" width="4.3" height="39.7" fill="#4a3a30"/>
<rect x="101.7" y="178.1" width="1.1" height="1.1" fill="#ffe9a0"/>
<rect x="100.6" y="184.5" width="1.1" height="1.1" fill="#ffd060"/>
<rect x="99.4" y="152.4" width="1.1" height="1.1" fill="#ffd060"/>
<rect x="101.1" y="167.2" width="1.1" height="1.1" fill="#fff6d8"/>
<rect x="99.7" y="164.9" width="1.1" height="1.1" fill="#ffd060"/>
<rect x="99.6" y="164.5" width="1.1" height="1.1" fill="#ffd060"/>
<rect x="101.3" y="183.1" width="1.1" height="1.1" fill="#ffe9a0"/>
<rect x="101.8" y="159.5" width="1.1" height="1.1" fill="#ffe9a0"/>
<rect x="101.7" y="162.9" width="1.1" height="1.1" fill="#ffd060"/>
<rect x="99.5" y="166.6" width="1.1" height="1.1" fill="#fff6d8"/>
<rect x="99.5" y="186.3" width="1.1" height="1.1" fill="#ffd060"/>
<rect x="101.6" y="162.6" width="1.1" height="1.1" fill="#ffe9a0"/>
<rect x="101.6" y="162.8" width="1.1" height="1.1" fill="#ffe9a0"/>
<rect x="100.0" y="162.1" width="1.1" height="1.1" fill="#fff6d8"/>
<rect x="100.2" y="180.7" width="1.1" height="1.1" fill="#ffd060"/>
<rect x="101.7" y="182.1" width="1.1" height="1.1" fill="#fff6d8"/>
<rect x="100.4" y="184.4" width="1.1" height="1.1" fill="#fff6d8"/>
<rect x="100.8" y="178.7" width="1.1" height="1.1" fill="#ffe9a0"/>
<rect x="128.5" y="133.0" width="9.7" height="57.0" fill="#5b6484"/>
<rect x="136.7" y="157.2" width="1.1" height="1.1" fill="#bfe6ff"/>
<rect x="135.2" y="169.8" width="1.1" height="1.1" fill="#d8f0ff"/>
<rect x="133.0" y="184.2" width="1.1" height="1.1" fill="#bfe6ff"/>
<rect x="130.1" y="160.5" width="1.1" height="1.1" fill="#d8f0ff"/>
<rect x="131.4" y="148.8" width="1.1" height="1.1" fill="#bfe6ff"/>
<rect x="137.0" y="149.0" width="1.1" height="1.1" fill="#bfe6ff"/>
<rect x="131.0" y="161.1" width="1.1" height="1.1" fill="#bfe6ff"/>
<rect x="132.3" y="144.0" width="1.1" height="1.1" fill="#ffffff"/>
<rect x="129.7" y="162.0" width="1.1" height="1.1" fill="#d8f0ff"/>
<rect x="133.6" y="159.5" width="1.1" height="1.1" fill="#d8f0ff"/>
<rect x="137.2" y="159.3" width="1.1" height="1.1" fill="#ffffff"/>
<rect x="133.5" y="148.2" width="1.1" height="1.1" fill="#ffffff"/>
<rect x="131.9" y="139.9" width="1.1" height="1.1" fill="#ffffff"/>
<rect x="132.1" y="178.7" width="1.1" height="1.1" fill="#ffffff"/>
<rect x="136.3" y="175.5" width="1.1" height="1.1" fill="#d8f0ff"/>
<rect x="132.2" y="175.3" width="1.1" height="1.1" fill="#ffffff"/>
<rect x="132.2" y="153.3" width="1.1" height="1.1" fill="#ffffff"/>
<rect x="133.1" y="166.0" width="1.1" height="1.1" fill="#d8f0ff"/>
<rect x="130.1" y="162.2" width="1.1" height="1.1" fill="#bfe6ff"/>
<rect x="135.5" y="180.8" width="1.1" height="1.1" fill="#ffffff"/>
<rect x="131.3" y="148.4" width="1.1" height="1.1" fill="#d8f0ff"/>
<rect x="134.3" y="158.3" width="1.1" height="1.1" fill="#d8f0ff"/>
<rect x="136.0" y="182.1" width="1.1" height="1.1" fill="#ffffff"/>
<rect x="130.1" y="158.0" width="1.1" height="1.1" fill="#d8f0ff"/>
<rect x="136.9" y="161.5" width="1.1" height="1.1" fill="#ffffff"/>
<rect x="132.3" y="185.0" width="1.1" height="1.1" fill="#bfe6ff"/>
<rect x="136.0" y="187.5" width="1.1" height="1.1" fill="#ffffff"/>
<rect x="135.4" y="147.1" width="1.1" height="1.1" fill="#ffffff"/>
<rect x="133.3" y="171.8" width="1.1" height="1.1" fill="#bfe6ff"/>
<rect x="134.8" y="180.7" width="1.1" height="1.1" fill="#d8f0ff"/>
<rect x="129.8" y="177.0" width="1.1" height="1.1" fill="#ffffff"/>
<rect x="135.4" y="147.6" width="1.1" height="1.1" fill="#ffffff"/>
<rect x="134.3" y="151.4" width="1.1" height="1.1" fill="#ffffff"/>
<rect x="134.2" y="163.5" width="1.1" height="1.1" fill="#d8f0ff"/>
<rect x="134.8" y="141.1" width="1.1" height="1.1" fill="#ffffff"/>
<rect x="131.5" y="186.0" width="1.1" height="1.1" fill="#ffffff"/>
<rect x="132.2" y="147.1" width="1.1" height="1.1" fill="#bfe6ff"/>
<rect x="129.1" y="164.0" width="1.1" height="1.1" fill="#d8f0ff"/>
<rect x="131.4" y="152.1" width="1.1" height="1.1" fill="#ffffff"/>
<rect x="132.9" y="147.7" width="1.1" height="1.1" fill="#ffffff"/>
<rect x="129.3" y="157.2" width="1.1" height="1.1" fill="#bfe6ff"/>
<rect x="131.6" y="136.2" width="1.1" height="1.1" fill="#d8f0ff"/>
<rect x="136.3" y="169.9" width="1.1" height="1.1" fill="#ffffff"/>
<rect x="131.2" y="171.0" width="1.1" height="1.1" fill="#d8f0ff"/>
<rect x="130.9" y="136.8" width="1.1" height="1.1" fill="#d8f0ff"/>
<rect x="134.9" y="154.6" width="1.1" height="1.1" fill="#d8f0ff"/>
<rect x="130.7" y="178.0" width="1.1" height="1.1" fill="#bfe6ff"/>
<rect x="135.9" y="138.6" width="1.1" height="1.1" fill="#d8f0ff"/>
<rect x="137.0" y="151.8" width="1.1" height="1.1" fill="#ffffff"/>
<rect x="131.0" y="147.0" width="1.1" height="1.1" fill="#d8f0ff"/>
<rect x="130.0" y="168.7" width="1.1" height="1.1" fill="#bfe6ff"/>
<rect x="130.6" y="147.1" width="1.1" height="1.1" fill="#d8f0ff"/>
<rect x="136.5" y="138.0" width="1.1" height="1.1" fill="#bfe6ff"/>
<rect x="130.3" y="156.2" width="1.1" height="1.1" fill="#ffffff"/>
<rect x="129.3" y="167.2" width="1.1" height="1.1" fill="#d8f0ff"/>
<rect x="129.5" y="138.2" width="1.1" height="1.1" fill="#d8f0ff"/>
<rect x="132.7" y="173.4" width="1.1" height="1.1" fill="#d8f0ff"/>
<rect x="135.0" y="188.9" width="1.1" height="1.1" fill="#ffffff"/>
<rect x="131.8" y="145.0" width="1.1" height="1.1" fill="#bfe6ff"/>
<rect x="135.1" y="136.7" width="1.1" height="1.1" fill="#bfe6ff"/>
<rect x="135.0" y="180.3" width="1.1" height="1.1" fill="#d8f0ff"/>
<rect x="129.5" y="129.2" width="7.7" height="4.3" fill="#cfe0ff"/>
<rect x="139.8" y="156.2" width="9.8" height="33.8" fill="#a8929c"/>
<rect x="144.0" y="161.6" width="1.1" height="1.1" fill="#ffffff"/>
<rect x="142.7" y="169.0" width="1.1" height="1.1" fill="#ffffff"/>
<rect x="145.0" y="181.6" width="1.1" height="1.1" fill="#ffd0e0"/>
<rect x="143.3" y="183.5" width="1.1" height="1.1" fill="#ffd0e0"/>
<rect x="141.1" y="179.9" width="1.1" height="1.1" fill="#d8f0ff"/>
<rect x="143.5" y="186.5" width="1.1" height="1.1" fill="#d8f0ff"/>
<rect x="143.1" y="180.9" width="1.1" height="1.1" fill="#ffd0e0"/>
<rect x="140.6" y="170.9" width="1.1" height="1.1" fill="#ffc0a0"/>
<rect x="146.7" y="159.5" width="1.1" height="1.1" fill="#ffffff"/>
<rect x="144.2" y="182.9" width="1.1" height="1.1" fill="#ffffff"/>
<rect x="142.5" y="181.2" width="1.1" height="1.1" fill="#fff"/>
<rect x="143.2" y="166.6" width="1.1" height="1.1" fill="#fff"/>
<rect x="140.8" y="181.2" width="1.1" height="1.1" fill="#ffc0a0"/>
<rect x="143.0" y="166.7" width="1.1" height="1.1" fill="#ffffff"/>
<rect x="146.3" y="176.5" width="1.1" height="1.1" fill="#ffc0a0"/>
<rect x="148.2" y="160.2" width="1.1" height="1.1" fill="#d8f0ff"/>
<rect x="141.3" y="180.2" width="1.1" height="1.1" fill="#ffd0e0"/>
<rect x="148.2" y="170.1" width="1.1" height="1.1" fill="#bfe6ff"/>
<rect x="147.9" y="183.3" width="1.1" height="1.1" fill="#d8f0ff"/>
<rect x="148.0" y="163.8" width="1.1" height="1.1" fill="#ffc0a0"/>
<rect x="142.9" y="179.5" width="1.1" height="1.1" fill="#d8f0ff"/>
<rect x="145.4" y="168.3" width="1.1" height="1.1" fill="#bfe6ff"/>
<rect x="144.2" y="182.3" width="1.1" height="1.1" fill="#fff"/>
<rect x="141.0" y="164.3" width="1.1" height="1.1" fill="#d8f0ff"/>
<rect x="142.4" y="160.2" width="1.1" height="1.1" fill="#ffffff"/>
<rect x="144.3" y="175.0" width="1.1" height="1.1" fill="#d8f0ff"/>
<rect x="148.4" y="185.4" width="1.1" height="1.1" fill="#ffffff"/>
<rect x="142.6" y="160.8" width="1.1" height="1.1" fill="#ffffff"/>
<rect x="143.9" y="188.6" width="1.1" height="1.1" fill="#ffd0e0"/>
<rect x="141.8" y="162.3" width="1.1" height="1.1" fill="#ffd0e0"/>
<rect x="145.5" y="179.0" width="1.1" height="1.1" fill="#ffc0a0"/>
<rect x="144.8" y="182.0" width="1.1" height="1.1" fill="#ffffff"/>
<rect x="146.8" y="167.3" width="1.1" height="1.1" fill="#bfe6ff"/>
<rect x="145.0" y="169.7" width="1.1" height="1.1" fill="#ffc0a0"/>
<rect x="142.5" y="171.7" width="1.1" height="1.1" fill="#d8f0ff"/>
<rect x="142.4" y="162.9" width="1.1" height="1.1" fill="#fff"/>
<rect x="156.0" y="161.0" width="5.0" height="29.0" fill="#2a2a3a"/>
<rect x="162.0" y="166.0" width="12.0" height="24.0" fill="#6b5a58"/>
<rect x="164.6" y="169.4" width="1.1" height="1.1" fill="#ffd060"/>
<rect x="172.9" y="178.7" width="1.1" height="1.1" fill="#ffe9a0"/>
<rect x="169.4" y="170.1" width="1.1" height="1.1" fill="#ffd060"/>
<rect x="172.9" y="170.1" width="1.1" height="1.1" fill="#ffd060"/>
<rect x="171.8" y="172.9" width="1.1" height="1.1" fill="#ffd060"/>
<rect x="172.1" y="168.8" width="1.1" height="1.1" fill="#ffd060"/>
<rect x="165.0" y="169.1" width="1.1" height="1.1" fill="#fff6d8"/>
<rect x="172.7" y="180.2" width="1.1" height="1.1" fill="#ffe9a0"/>
<rect x="166.5" y="186.2" width="1.1" height="1.1" fill="#ffd060"/>
<rect x="168.9" y="184.3" width="1.1" height="1.1" fill="#fff6d8"/>
<rect x="172.4" y="170.2" width="1.1" height="1.1" fill="#fff6d8"/>
<rect x="170.0" y="175.3" width="1.1" height="1.1" fill="#ffe9a0"/>
<rect x="166.4" y="171.0" width="1.1" height="1.1" fill="#ffe9a0"/>
<rect x="173.0" y="168.8" width="1.1" height="1.1" fill="#fff6d8"/>
<rect x="169.4" y="172.3" width="1.1" height="1.1" fill="#ffe9a0"/>
<rect x="171.1" y="176.6" width="1.1" height="1.1" fill="#ffd060"/>
<rect x="164.5" y="174.6" width="1.1" height="1.1" fill="#ffe9a0"/>
<rect x="162.9" y="178.4" width="1.1" height="1.1" fill="#ffd060"/>
<rect x="163.3" y="170.1" width="1.1" height="1.1" fill="#ffd060"/>
<rect x="169.5" y="171.2" width="1.1" height="1.1" fill="#fff6d8"/>
<rect x="163.5" y="171.4" width="1.1" height="1.1" fill="#fff6d8"/>
<rect x="165.4" y="188.8" width="1.1" height="1.1" fill="#fff6d8"/>
<rect x="165.8" y="188.0" width="1.1" height="1.1" fill="#ffd060"/>
<rect x="170.4" y="186.6" width="1.1" height="1.1" fill="#ffd060"/>
<rect x="166.9" y="186.1" width="1.1" height="1.1" fill="#ffd060"/>
<rect x="169.3" y="176.2" width="1.1" height="1.1" fill="#ffd060"/>
<rect x="164.7" y="168.1" width="1.1" height="1.1" fill="#ffe9a0"/>
<rect x="167.0" y="185.2" width="1.1" height="1.1" fill="#ffd060"/>
<rect x="168.6" y="175.7" width="1.1" height="1.1" fill="#ffe9a0"/>
<rect x="164.0" y="169.1" width="1.1" height="1.1" fill="#ffe9a0"/>
<rect x="169.3" y="187.1" width="1.1" height="1.1" fill="#ffe9a0"/>
<rect x="168.6" y="187.5" width="1.1" height="1.1" fill="#fff6d8"/>
<rect x="174.0" y="150.5" width="18.2" height="39.5" fill="#7d6c84"/>
<rect x="174.0" y="150.5" width="18.2" height="2.2" fill="#8fd8e0"/>
<rect x="183.0" y="157.8" width="1.1" height="1.1" fill="#ffc0a0"/>
<rect x="177.3" y="158.8" width="1.1" height="1.1" fill="#ffd0e0"/>
<rect x="176.4" y="170.4" width="1.1" height="1.1" fill="#fff"/>
<rect x="179.6" y="183.1" width="1.1" height="1.1" fill="#ffd0e0"/>
<rect x="190.8" y="170.1" width="1.1" height="1.1" fill="#ffd0e0"/>
<rect x="184.7" y="175.7" width="1.1" height="1.1" fill="#ffd0e0"/>
<rect x="189.6" y="175.1" width="1.1" height="1.1" fill="#fff"/>
<rect x="185.2" y="183.8" width="1.1" height="1.1" fill="#d8f0ff"/>
<rect x="181.3" y="183.4" width="1.1" height="1.1" fill="#ffffff"/>
<rect x="177.6" y="160.5" width="1.1" height="1.1" fill="#ffffff"/>
<rect x="190.2" y="158.2" width="1.1" height="1.1" fill="#ffc0a0"/>
<rect x="176.6" y="161.5" width="1.1" height="1.1" fill="#bfe6ff"/>
<rect x="188.1" y="159.5" width="1.1" height="1.1" fill="#d8f0ff"/>
<rect x="188.6" y="177.0" width="1.1" height="1.1" fill="#bfe6ff"/>
<rect x="188.5" y="156.8" width="1.1" height="1.1" fill="#d8f0ff"/>
<rect x="182.2" y="183.5" width="1.1" height="1.1" fill="#ffc0a0"/>
<rect x="185.4" y="163.7" width="1.1" height="1.1" fill="#fff"/>
<rect x="181.7" y="176.5" width="1.1" height="1.1" fill="#ffffff"/>
<rect x="183.0" y="159.0" width="1.1" height="1.1" fill="#ffd0e0"/>
<rect x="184.9" y="170.4" width="1.1" height="1.1" fill="#fff"/>
<rect x="182.0" y="175.1" width="1.1" height="1.1" fill="#ffffff"/>
<rect x="188.5" y="182.1" width="1.1" height="1.1" fill="#ffffff"/>
<rect x="176.4" y="157.2" width="1.1" height="1.1" fill="#ffffff"/>
<rect x="180.7" y="181.8" width="1.1" height="1.1" fill="#d8f0ff"/>
<rect x="183.1" y="154.0" width="1.1" height="1.1" fill="#bfe6ff"/>
<rect x="176.8" y="186.2" width="1.1" height="1.1" fill="#ffc0a0"/>
<rect x="187.5" y="171.2" width="1.1" height="1.1" fill="#ffd0e0"/>
<rect x="187.1" y="185.2" width="1.1" height="1.1" fill="#bfe6ff"/>
<rect x="190.4" y="157.5" width="1.1" height="1.1" fill="#ffd0e0"/>
<rect x="191.1" y="179.2" width="1.1" height="1.1" fill="#ffd0e0"/>
<rect x="177.8" y="188.3" width="1.1" height="1.1" fill="#ffffff"/>
<rect x="179.4" y="182.1" width="1.1" height="1.1" fill="#fff"/>
<rect x="186.0" y="178.8" width="1.1" height="1.1" fill="#fff"/>
<rect x="175.7" y="165.3" width="1.1" height="1.1" fill="#ffc0a0"/>
<rect x="177.2" y="185.2" width="1.1" height="1.1" fill="#ffc0a0"/>
<rect x="189.6" y="169.2" width="1.1" height="1.1" fill="#ffc0a0"/>
<rect x="182.9" y="186.1" width="1.1" height="1.1" fill="#fff"/>
<rect x="184.4" y="175.0" width="1.1" height="1.1" fill="#fff"/>
<rect x="179.9" y="153.8" width="1.1" height="1.1" fill="#fff"/>
<rect x="181.3" y="175.7" width="1.1" height="1.1" fill="#ffc0a0"/>
<rect x="185.9" y="185.2" width="1.1" height="1.1" fill="#fff"/>
<rect x="187.7" y="162.1" width="1.1" height="1.1" fill="#d8f0ff"/>
<rect x="175.4" y="183.8" width="1.1" height="1.1" fill="#ffffff"/>
<rect x="183.8" y="173.7" width="1.1" height="1.1" fill="#ffd0e0"/>
<rect x="178.8" y="172.1" width="1.1" height="1.1" fill="#ffffff"/>
<rect x="186.8" y="166.1" width="1.1" height="1.1" fill="#ffffff"/>
<rect x="191.0" y="173.6" width="1.1" height="1.1" fill="#ffc0a0"/>
<rect x="180.1" y="155.5" width="1.1" height="1.1" fill="#fff"/>
<rect x="177.5" y="179.6" width="1.1" height="1.1" fill="#ffd0e0"/>
<rect x="179.5" y="171.3" width="1.1" height="1.1" fill="#ffc0a0"/>
<rect x="185.2" y="188.4" width="1.1" height="1.1" fill="#d8f0ff"/>
<rect x="190.0" y="185.2" width="1.1" height="1.1" fill="#bfe6ff"/>
<rect x="174.6" y="153.7" width="1.1" height="1.1" fill="#fff"/>
<rect x="179.4" y="175.3" width="1.1" height="1.1" fill="#ffffff"/>
<rect x="183.1" y="185.2" width="1.1" height="1.1" fill="#fff"/>
<rect x="182.7" y="174.9" width="1.1" height="1.1" fill="#ffd0e0"/>
<rect x="175.0" y="152.6" width="1.1" height="1.1" fill="#ffc0a0"/>
<rect x="179.6" y="171.6" width="1.1" height="1.1" fill="#d8f0ff"/>
<rect x="178.3" y="173.8" width="1.1" height="1.1" fill="#d8f0ff"/>
<rect x="176.8" y="165.9" width="1.1" height="1.1" fill="#ffffff"/>
<rect x="177.2" y="153.0" width="1.1" height="1.1" fill="#fff"/>
<rect x="186.3" y="169.0" width="1.1" height="1.1" fill="#ffd0e0"/>
<rect x="185.2" y="184.3" width="1.1" height="1.1" fill="#ffc0a0"/>
<rect x="181.3" y="162.1" width="1.1" height="1.1" fill="#ffd0e0"/>
<rect x="175.5" y="182.5" width="1.1" height="1.1" fill="#ffc0a0"/>
<rect x="184.5" y="173.6" width="1.1" height="1.1" fill="#d8f0ff"/>
<rect x="190.2" y="179.3" width="1.1" height="1.1" fill="#fff"/>
<rect x="177.3" y="152.5" width="1.1" height="1.1" fill="#ffd0e0"/>
<rect x="183.4" y="167.3" width="1.1" height="1.1" fill="#fff"/>
<rect x="177.2" y="185.8" width="1.1" height="1.1" fill="#ffd0e0"/>
<rect x="174.8" y="172.6" width="1.1" height="1.1" fill="#fff"/>
<rect x="177.0" y="159.8" width="1.1" height="1.1" fill="#d8f0ff"/>
<rect x="185.3" y="176.1" width="1.1" height="1.1" fill="#ffffff"/>
<rect x="188.1" y="158.9" width="1.1" height="1.1" fill="#ffc0a0"/>
<rect x="175.7" y="175.3" width="1.1" height="1.1" fill="#bfe6ff"/>
<rect x="187.6" y="178.6" width="1.1" height="1.1" fill="#ffd0e0"/>
<rect x="180.8" y="168.4" width="1.1" height="1.1" fill="#ffffff"/>
<rect x="175.9" y="176.4" width="1.1" height="1.1" fill="#fff"/>
<rect x="178.4" y="156.3" width="1.1" height="1.1" fill="#fff"/>
<rect x="186.0" y="145.0" width="12.0" height="2.0" fill="#9aa0a8"/>
<rect x="192.2" y="152.0" width="15.8" height="38.0" fill="#26242c"/>
<rect x="192.2" y="152.0" width="15.8" height="2.2" fill="#5fc0d0"/>
<rect x="201.9" y="158.3" width="1.1" height="1.1" fill="#fff6d8"/>
<rect x="205.9" y="187.0" width="1.1" height="1.1" fill="#ffd060"/>
<rect x="202.9" y="163.3" width="1.1" height="1.1" fill="#fff6d8"/>
<rect x="202.4" y="178.0" width="1.1" height="1.1" fill="#fff6d8"/>
<rect x="206.6" y="164.3" width="1.1" height="1.1" fill="#ffe9a0"/>
<rect x="194.0" y="171.8" width="1.1" height="1.1" fill="#ffe9a0"/>
<rect x="196.5" y="162.3" width="1.1" height="1.1" fill="#fff6d8"/>
<rect x="195.7" y="159.6" width="1.1" height="1.1" fill="#ffd060"/>
<rect x="195.5" y="167.6" width="1.1" height="1.1" fill="#fff6d8"/>
<rect x="196.2" y="185.8" width="1.1" height="1.1" fill="#fff6d8"/>
<rect x="205.9" y="188.4" width="1.1" height="1.1" fill="#fff6d8"/>
<rect x="199.5" y="183.4" width="1.1" height="1.1" fill="#fff6d8"/>
<rect x="192.9" y="154.9" width="1.1" height="1.1" fill="#fff6d8"/>
<rect x="196.1" y="185.0" width="1.1" height="1.1" fill="#ffe9a0"/>
<rect x="198.4" y="174.5" width="1.1" height="1.1" fill="#fff6d8"/>
<rect x="205.7" y="159.1" width="1.1" height="1.1" fill="#ffe9a0"/>
<rect x="194.4" y="175.8" width="1.1" height="1.1" fill="#ffe9a0"/>
<rect x="197.7" y="159.0" width="1.1" height="1.1" fill="#ffe9a0"/>
<rect x="193.2" y="158.8" width="1.1" height="1.1" fill="#fff6d8"/>
<rect x="201.8" y="178.4" width="1.1" height="1.1" fill="#fff6d8"/>
<rect x="193.5" y="184.0" width="1.1" height="1.1" fill="#ffd060"/>
<rect x="195.6" y="187.4" width="1.1" height="1.1" fill="#fff6d8"/>
<rect x="205.5" y="156.3" width="1.1" height="1.1" fill="#fff6d8"/>
<rect x="206.2" y="157.7" width="1.1" height="1.1" fill="#ffe9a0"/>
<rect x="195.7" y="155.2" width="1.1" height="1.1" fill="#fff6d8"/>
<rect x="194.0" y="180.3" width="1.1" height="1.1" fill="#fff6d8"/>
<rect x="196.9" y="157.5" width="1.1" height="1.1" fill="#ffe9a0"/>
<rect x="204.0" y="176.6" width="1.1" height="1.1" fill="#ffd060"/>
<rect x="197.3" y="168.8" width="1.1" height="1.1" fill="#ffe9a0"/>
<rect x="197.8" y="186.6" width="1.1" height="1.1" fill="#ffe9a0"/>
<rect x="203.0" y="166.9" width="1.1" height="1.1" fill="#ffd060"/>
<rect x="203.7" y="175.1" width="1.1" height="1.1" fill="#ffd060"/>
<rect x="204.9" y="175.6" width="1.1" height="1.1" fill="#ffe9a0"/>
<rect x="204.0" y="155.1" width="1.1" height="1.1" fill="#fff6d8"/>
<rect x="203.8" y="166.1" width="1.1" height="1.1" fill="#fff6d8"/>
<rect x="193.5" y="173.8" width="1.1" height="1.1" fill="#fff6d8"/>
<rect x="205.0" y="157.2" width="1.1" height="1.1" fill="#ffd060"/>
<rect x="195.2" y="154.0" width="1.1" height="1.1" fill="#ffe9a0"/>
<rect x="196.9" y="180.3" width="1.1" height="1.1" fill="#ffe9a0"/>
<rect x="192.9" y="171.2" width="1.1" height="1.1" fill="#ffd060"/>
<rect x="202.7" y="182.9" width="1.1" height="1.1" fill="#ffd060"/>
<rect x="201.2" y="187.5" width="1.1" height="1.1" fill="#fff6d8"/>
<rect x="196.5" y="187.0" width="1.1" height="1.1" fill="#ffd060"/>
<rect x="204.4" y="186.8" width="1.1" height="1.1" fill="#ffe9a0"/>
<rect x="199.9" y="157.8" width="1.1" height="1.1" fill="#fff6d8"/>
<rect x="203.7" y="171.2" width="1.1" height="1.1" fill="#fff6d8"/>
<rect x="200.8" y="157.7" width="1.1" height="1.1" fill="#ffd060"/>
<rect x="197.8" y="168.0" width="1.1" height="1.1" fill="#ffd060"/>
<rect x="205.5" y="180.1" width="1.1" height="1.1" fill="#ffd060"/>
<rect x="205.4" y="154.9" width="1.1" height="1.1" fill="#ffe9a0"/>
<rect x="197.1" y="169.0" width="1.1" height="1.1" fill="#fff6d8"/>
<rect x="199.9" y="167.3" width="1.1" height="1.1" fill="#fff6d8"/>
<rect x="196.1" y="170.1" width="1.1" height="1.1" fill="#fff6d8"/>
<rect x="201.2" y="178.1" width="1.1" height="1.1" fill="#fff6d8"/>
<rect x="202.0" y="166.2" width="1.1" height="1.1" fill="#ffd060"/>
<rect x="200.2" y="184.4" width="1.1" height="1.1" fill="#ffd060"/>
<rect x="202.2" y="180.0" width="1.1" height="1.1" fill="#ffe9a0"/>
<rect x="199.4" y="178.1" width="1.1" height="1.1" fill="#ffd060"/>
<rect x="201.0" y="158.4" width="1.1" height="1.1" fill="#ffd060"/>
<rect x="201.9" y="178.4" width="1.1" height="1.1" fill="#fff6d8"/>
<rect x="195.5" y="164.6" width="1.1" height="1.1" fill="#fff6d8"/>
<rect x="204.5" y="175.6" width="1.1" height="1.1" fill="#fff6d8"/>
<rect x="195.0" y="162.7" width="1.1" height="1.1" fill="#ffd060"/>
<rect x="201.4" y="166.2" width="1.1" height="1.1" fill="#ffe9a0"/>
<rect x="197.5" y="160.6" width="1.1" height="1.1" fill="#fff6d8"/>
<rect x="206.9" y="159.8" width="1.1" height="1.1" fill="#fff6d8"/>
<rect x="227.4" y="149.7" width="10.2" height="40.3" fill="#8fb8c0"/>
<rect x="227.4" y="149.7" width="10.2" height="2.2" fill="#e8ffff"/>
<rect x="228.9" y="166.0" width="1.1" height="1.1" fill="#ffffff"/>
<rect x="234.8" y="179.1" width="1.1" height="1.1" fill="#d8f0ff"/>
<rect x="230.4" y="155.8" width="1.1" height="1.1" fill="#ffffff"/>
<rect x="230.4" y="184.7" width="1.1" height="1.1" fill="#d8f0ff"/>
<rect x="228.3" y="166.6" width="1.1" height="1.1" fill="#d8f0ff"/>
<rect x="234.0" y="170.4" width="1.1" height="1.1" fill="#bfe6ff"/>
<rect x="230.5" y="152.5" width="1.1" height="1.1" fill="#d8f0ff"/>
<rect x="233.2" y="166.8" width="1.1" height="1.1" fill="#bfe6ff"/>
<rect x="230.1" y="183.5" width="1.1" height="1.1" fill="#bfe6ff"/>
<rect x="232.9" y="179.6" width="1.1" height="1.1" fill="#d8f0ff"/>
<rect x="235.3" y="176.6" width="1.1" height="1.1" fill="#bfe6ff"/>
<rect x="235.6" y="180.6" width="1.1" height="1.1" fill="#bfe6ff"/>
<rect x="233.0" y="160.2" width="1.1" height="1.1" fill="#ffffff"/>
<rect x="233.5" y="168.6" width="1.1" height="1.1" fill="#d8f0ff"/>
<rect x="230.2" y="177.8" width="1.1" height="1.1" fill="#d8f0ff"/>
<rect x="230.1" y="166.6" width="1.1" height="1.1" fill="#bfe6ff"/>
<rect x="233.4" y="161.0" width="1.1" height="1.1" fill="#d8f0ff"/>
<rect x="232.2" y="152.4" width="1.1" height="1.1" fill="#d8f0ff"/>
<rect x="232.5" y="176.4" width="1.1" height="1.1" fill="#ffffff"/>
<rect x="235.7" y="163.9" width="1.1" height="1.1" fill="#ffffff"/>
<rect x="231.3" y="170.0" width="1.1" height="1.1" fill="#ffffff"/>
<rect x="228.3" y="172.0" width="1.1" height="1.1" fill="#ffffff"/>
<rect x="234.2" y="187.2" width="1.1" height="1.1" fill="#ffffff"/>
<rect x="232.5" y="155.5" width="1.1" height="1.1" fill="#bfe6ff"/>
<rect x="231.9" y="159.3" width="1.1" height="1.1" fill="#d8f0ff"/>
<rect x="232.4" y="175.5" width="1.1" height="1.1" fill="#d8f0ff"/>
<rect x="232.5" y="167.0" width="1.1" height="1.1" fill="#d8f0ff"/>
<rect x="229.8" y="177.2" width="1.1" height="1.1" fill="#d8f0ff"/>
<rect x="232.4" y="186.5" width="1.1" height="1.1" fill="#bfe6ff"/>
<rect x="236.5" y="165.0" width="1.1" height="1.1" fill="#ffffff"/>
<rect x="230.2" y="165.9" width="1.1" height="1.1" fill="#ffffff"/>
<rect x="228.1" y="167.3" width="1.1" height="1.1" fill="#d8f0ff"/>
<rect x="233.4" y="176.9" width="1.1" height="1.1" fill="#bfe6ff"/>
<rect x="230.3" y="160.1" width="1.1" height="1.1" fill="#bfe6ff"/>
<rect x="231.4" y="187.3" width="1.1" height="1.1" fill="#ffffff"/>
<rect x="236.6" y="187.5" width="1.1" height="1.1" fill="#d8f0ff"/>
<rect x="229.8" y="156.5" width="1.1" height="1.1" fill="#ffffff"/>
<rect x="235.0" y="175.4" width="1.1" height="1.1" fill="#d8f0ff"/>
<rect x="233.5" y="178.6" width="1.1" height="1.1" fill="#ffffff"/>
<rect x="231.0" y="175.5" width="1.1" height="1.1" fill="#d8f0ff"/>
<rect x="232.0" y="162.7" width="1.1" height="1.1" fill="#bfe6ff"/>
<rect x="233.6" y="180.8" width="1.1" height="1.1" fill="#d8f0ff"/>
<rect x="231.1" y="183.4" width="1.1" height="1.1" fill="#d8f0ff"/>
<rect x="234.1" y="177.3" width="1.1" height="1.1" fill="#d8f0ff"/>
<rect x="233.8" y="169.7" width="1.1" height="1.1" fill="#bfe6ff"/>
<rect x="239.8" y="148.0" width="13.0" height="42.0" fill="#7fa6c4"/>
<rect x="249.5" y="164.0" width="1.1" height="1.1" fill="#bfe6ff"/>
<rect x="243.8" y="168.7" width="1.1" height="1.1" fill="#d8f0ff"/>
<rect x="247.5" y="153.3" width="1.1" height="1.1" fill="#d8f0ff"/>
<rect x="242.1" y="161.8" width="1.1" height="1.1" fill="#d8f0ff"/>
<rect x="241.1" y="182.3" width="1.1" height="1.1" fill="#d8f0ff"/>
<rect x="249.3" y="155.5" width="1.1" height="1.1" fill="#d8f0ff"/>
<rect x="247.6" y="150.6" width="1.1" height="1.1" fill="#ffffff"/>
<rect x="242.8" y="152.8" width="1.1" height="1.1" fill="#d8f0ff"/>
<rect x="243.3" y="154.0" width="1.1" height="1.1" fill="#ffffff"/>
<rect x="250.1" y="157.2" width="1.1" height="1.1" fill="#d8f0ff"/>
<rect x="244.3" y="156.0" width="1.1" height="1.1" fill="#d8f0ff"/>
<rect x="249.4" y="156.5" width="1.1" height="1.1" fill="#bfe6ff"/>
<rect x="247.3" y="180.5" width="1.1" height="1.1" fill="#bfe6ff"/>
<rect x="250.7" y="171.4" width="1.1" height="1.1" fill="#bfe6ff"/>
<rect x="250.0" y="157.7" width="1.1" height="1.1" fill="#bfe6ff"/>
<rect x="242.8" y="153.1" width="1.1" height="1.1" fill="#d8f0ff"/>
<rect x="248.1" y="154.6" width="1.1" height="1.1" fill="#ffffff"/>
<rect x="243.4" y="159.1" width="1.1" height="1.1" fill="#ffffff"/>
<rect x="245.8" y="171.7" width="1.1" height="1.1" fill="#d8f0ff"/>
<rect x="245.7" y="155.6" width="1.1" height="1.1" fill="#d8f0ff"/>
<rect x="243.2" y="156.4" width="1.1" height="1.1" fill="#bfe6ff"/>
<rect x="250.2" y="150.3" width="1.1" height="1.1" fill="#d8f0ff"/>
<rect x="245.7" y="171.9" width="1.1" height="1.1" fill="#bfe6ff"/>
<rect x="243.8" y="168.2" width="1.1" height="1.1" fill="#d8f0ff"/>
<rect x="245.2" y="187.5" width="1.1" height="1.1" fill="#ffffff"/>
<rect x="242.5" y="164.1" width="1.1" height="1.1" fill="#bfe6ff"/>
<rect x="240.7" y="173.8" width="1.1" height="1.1" fill="#bfe6ff"/>
<rect x="248.8" y="189.0" width="1.1" height="1.1" fill="#ffffff"/>
<rect x="246.2" y="168.9" width="1.1" height="1.1" fill="#ffffff"/>
<rect x="240.8" y="178.0" width="1.1" height="1.1" fill="#bfe6ff"/>
<rect x="241.8" y="153.7" width="1.1" height="1.1" fill="#bfe6ff"/>
<rect x="244.6" y="168.5" width="1.1" height="1.1" fill="#bfe6ff"/>
<rect x="246.7" y="185.6" width="1.1" height="1.1" fill="#d8f0ff"/>
<rect x="245.4" y="166.5" width="1.1" height="1.1" fill="#bfe6ff"/>
<rect x="241.0" y="161.3" width="1.1" height="1.1" fill="#d8f0ff"/>
<rect x="249.8" y="165.7" width="1.1" height="1.1" fill="#bfe6ff"/>
<rect x="251.6" y="184.0" width="1.1" height="1.1" fill="#d8f0ff"/>
<rect x="251.5" y="175.5" width="1.1" height="1.1" fill="#ffffff"/>
<rect x="244.2" y="162.4" width="1.1" height="1.1" fill="#d8f0ff"/>
<rect x="241.9" y="187.9" width="1.1" height="1.1" fill="#ffffff"/>
<rect x="249.3" y="151.6" width="1.1" height="1.1" fill="#bfe6ff"/>
<rect x="246.7" y="165.8" width="1.1" height="1.1" fill="#bfe6ff"/>
<rect x="241.0" y="161.7" width="1.1" height="1.1" fill="#ffffff"/>
<rect x="240.9" y="182.1" width="1.1" height="1.1" fill="#d8f0ff"/>
<rect x="247.3" y="175.7" width="1.1" height="1.1" fill="#bfe6ff"/>
<rect x="250.8" y="173.9" width="1.1" height="1.1" fill="#bfe6ff"/>
<rect x="242.1" y="176.3" width="1.1" height="1.1" fill="#bfe6ff"/>
<rect x="247.2" y="176.6" width="1.1" height="1.1" fill="#ffffff"/>
<rect x="240.9" y="174.7" width="1.1" height="1.1" fill="#bfe6ff"/>
<rect x="249.1" y="154.0" width="1.1" height="1.1" fill="#ffffff"/>
<rect x="250.3" y="166.4" width="1.1" height="1.1" fill="#ffffff"/>
<rect x="250.8" y="175.6" width="1.1" height="1.1" fill="#d8f0ff"/>
<rect x="250.3" y="155.4" width="1.1" height="1.1" fill="#d8f0ff"/>
<rect x="246.8" y="160.1" width="1.1" height="1.1" fill="#d8f0ff"/>
<rect x="242.5" y="151.3" width="1.1" height="1.1" fill="#ffffff"/>
<rect x="245.3" y="175.0" width="1.1" height="1.1" fill="#ffffff"/>
<rect x="246.1" y="170.4" width="1.1" height="1.1" fill="#ffffff"/>
<rect x="249.2" y="166.4" width="1.1" height="1.1" fill="#bfe6ff"/>
<rect x="250.9" y="167.4" width="1.1" height="1.1" fill="#ffffff"/>
<rect x="248.2" y="173.2" width="1.1" height="1.1" fill="#bfe6ff"/>
<rect x="242.5" y="141.0" width="8.0" height="7.5" fill="#9cc4dc"/>
<rect x="249.4" y="145.1" width="1.1" height="1.1" fill="#d8f0ff"/>
<rect x="246.6" y="143.4" width="1.1" height="1.1" fill="#d8f0ff"/>
<rect x="244.5" y="143.7" width="1.1" height="1.1" fill="#ffffff"/>
<rect x="245.8" y="143.0" width="1.1" height="1.1" fill="#bfe6ff"/>
<rect x="243.9" y="147.3" width="1.1" height="1.1" fill="#ffffff"/>
<rect x="244.5" y="143.5" width="1.1" height="1.1" fill="#d8f0ff"/>
<rect x="245.5" y="138.5" width="2.0" height="3.5" fill="#e8f8ff"/>
<rect x="257.0" y="163.3" width="13.0" height="26.7" fill="#33302e"/>
<rect x="257.8" y="182.3" width="1.1" height="1.1" fill="#ffe9a0"/>
<rect x="262.7" y="182.9" width="1.1" height="1.1" fill="#ffe9a0"/>
<rect x="261.8" y="183.0" width="1.1" height="1.1" fill="#fff6d8"/>
<rect x="267.4" y="182.6" width="1.1" height="1.1" fill="#ffe9a0"/>
<rect x="260.9" y="178.5" width="1.1" height="1.1" fill="#ffd060"/>
<rect x="262.9" y="187.4" width="1.1" height="1.1" fill="#ffd060"/>
<rect x="268.0" y="166.5" width="1.1" height="1.1" fill="#ffe9a0"/>
<rect x="257.7" y="165.6" width="1.1" height="1.1" fill="#fff6d8"/>
<rect x="265.4" y="180.0" width="1.1" height="1.1" fill="#ffd060"/>
<rect x="261.1" y="182.6" width="1.1" height="1.1" fill="#ffe9a0"/>
<rect x="268.5" y="185.1" width="1.1" height="1.1" fill="#fff6d8"/>
<rect x="258.3" y="174.0" width="1.1" height="1.1" fill="#fff6d8"/>
<rect x="265.9" y="176.4" width="1.1" height="1.1" fill="#ffe9a0"/>
<rect x="259.3" y="184.2" width="1.1" height="1.1" fill="#ffd060"/>
<rect x="268.5" y="169.2" width="1.1" height="1.1" fill="#ffd060"/>
<rect x="263.0" y="183.7" width="1.1" height="1.1" fill="#ffd060"/>
<rect x="268.4" y="183.9" width="1.1" height="1.1" fill="#fff6d8"/>
<rect x="261.4" y="171.9" width="1.1" height="1.1" fill="#fff6d8"/>
<rect x="268.7" y="182.0" width="1.1" height="1.1" fill="#fff6d8"/>
<rect x="261.4" y="179.7" width="1.1" height="1.1" fill="#ffe9a0"/>
<rect x="267.1" y="179.5" width="1.1" height="1.1" fill="#ffd060"/>
<rect x="264.3" y="188.4" width="1.1" height="1.1" fill="#ffe9a0"/>
<rect x="261.9" y="181.5" width="1.1" height="1.1" fill="#fff6d8"/>
<rect x="266.4" y="170.9" width="1.1" height="1.1" fill="#ffd060"/>
<rect x="260.8" y="165.3" width="1.1" height="1.1" fill="#ffd060"/>
<rect x="260.7" y="169.0" width="1.1" height="1.1" fill="#ffe9a0"/>
<rect x="260.9" y="168.6" width="1.1" height="1.1" fill="#fff6d8"/>
<rect x="259.3" y="188.4" width="1.1" height="1.1" fill="#fff6d8"/>
<rect x="265.4" y="187.0" width="1.1" height="1.1" fill="#ffd060"/>
<rect x="263.7" y="178.1" width="1.1" height="1.1" fill="#ffd060"/>
<rect x="266.7" y="170.1" width="1.1" height="1.1" fill="#fff6d8"/>
<rect x="268.2" y="170.8" width="1.1" height="1.1" fill="#fff6d8"/>
<rect x="258.3" y="174.7" width="1.1" height="1.1" fill="#fff6d8"/>
<rect x="260.0" y="171.3" width="1.1" height="1.1" fill="#ffe9a0"/>
<rect x="266.6" y="176.2" width="1.1" height="1.1" fill="#ffe9a0"/>
<rect x="263.7" y="173.7" width="1.1" height="1.1" fill="#ffe9a0"/>
<rect x="260.3" y="179.0" width="1.1" height="1.1" fill="#ffd060"/>
<rect x="267.7" y="177.7" width="1.1" height="1.1" fill="#ffd060"/>
<rect x="270.0" y="155.0" width="11.4" height="35.0" fill="#b8b8c0"/>
<rect x="275.6" y="163.5" width="1.1" height="1.1" fill="#ffffff"/>
<rect x="272.5" y="162.8" width="1.1" height="1.1" fill="#bfe6ff"/>
<rect x="273.4" y="175.5" width="1.1" height="1.1" fill="#d8f0ff"/>
<rect x="274.5" y="173.6" width="1.1" height="1.1" fill="#ffffff"/>
<rect x="273.0" y="186.5" width="1.1" height="1.1" fill="#d8f0ff"/>
<rect x="274.3" y="160.4" width="1.1" height="1.1" fill="#bfe6ff"/>
<rect x="275.1" y="159.6" width="1.1" height="1.1" fill="#d8f0ff"/>
<rect x="276.5" y="168.0" width="1.1" height="1.1" fill="#bfe6ff"/>
<rect x="276.5" y="160.0" width="1.1" height="1.1" fill="#ffffff"/>
<rect x="280.3" y="184.7" width="1.1" height="1.1" fill="#d8f0ff"/>
<rect x="276.3" y="163.8" width="1.1" height="1.1" fill="#d8f0ff"/>
<rect x="274.8" y="187.3" width="1.1" height="1.1" fill="#bfe6ff"/>
<rect x="278.6" y="187.8" width="1.1" height="1.1" fill="#d8f0ff"/>
<rect x="278.9" y="167.8" width="1.1" height="1.1" fill="#ffffff"/>
<rect x="274.3" y="157.9" width="1.1" height="1.1" fill="#ffffff"/>
<rect x="276.1" y="184.9" width="1.1" height="1.1" fill="#d8f0ff"/>
<rect x="275.4" y="184.1" width="1.1" height="1.1" fill="#ffffff"/>
<rect x="279.1" y="177.5" width="1.1" height="1.1" fill="#ffffff"/>
<rect x="277.5" y="159.9" width="1.1" height="1.1" fill="#d8f0ff"/>
<rect x="276.1" y="177.5" width="1.1" height="1.1" fill="#bfe6ff"/>
<rect x="275.6" y="162.8" width="1.1" height="1.1" fill="#ffffff"/>
<rect x="274.2" y="164.5" width="1.1" height="1.1" fill="#bfe6ff"/>
<rect x="272.8" y="158.2" width="1.1" height="1.1" fill="#d8f0ff"/>
<rect x="279.8" y="158.9" width="1.1" height="1.1" fill="#bfe6ff"/>
<rect x="279.5" y="183.8" width="1.1" height="1.1" fill="#ffffff"/>
<rect x="273.1" y="173.4" width="1.1" height="1.1" fill="#bfe6ff"/>
<rect x="276.9" y="188.5" width="1.1" height="1.1" fill="#ffffff"/>
<rect x="271.6" y="167.2" width="1.1" height="1.1" fill="#ffffff"/>
<rect x="279.8" y="178.7" width="1.1" height="1.1" fill="#d8f0ff"/>
<rect x="276.4" y="171.1" width="1.1" height="1.1" fill="#bfe6ff"/>
<rect x="271.6" y="167.4" width="1.1" height="1.1" fill="#d8f0ff"/>
<rect x="274.4" y="169.0" width="1.1" height="1.1" fill="#d8f0ff"/>
<rect x="272.3" y="164.6" width="1.1" height="1.1" fill="#ffffff"/>
<rect x="279.6" y="185.5" width="1.1" height="1.1" fill="#d8f0ff"/>
<rect x="277.6" y="163.2" width="1.1" height="1.1" fill="#ffffff"/>
<rect x="272.1" y="183.7" width="1.1" height="1.1" fill="#ffffff"/>
<rect x="279.8" y="184.7" width="1.1" height="1.1" fill="#bfe6ff"/>
<rect x="272.0" y="171.3" width="1.1" height="1.1" fill="#ffffff"/>
<rect x="279.7" y="169.3" width="1.1" height="1.1" fill="#ffffff"/>
<rect x="276.8" y="171.5" width="1.1" height="1.1" fill="#d8f0ff"/>
<rect x="273.8" y="164.5" width="1.1" height="1.1" fill="#ffffff"/>
<rect x="276.8" y="161.6" width="1.1" height="1.1" fill="#ffffff"/>
<rect x="277.8" y="162.8" width="1.1" height="1.1" fill="#d8f0ff"/>
<rect x="276.0" y="161.6" width="1.1" height="1.1" fill="#ffffff"/>
<rect x="281.4" y="162.0" width="9.2" height="28.0" fill="#6c7078"/>
<rect x="284.0" y="174.3" width="1.1" height="1.1" fill="#ffffff"/>
<rect x="282.2" y="178.3" width="1.1" height="1.1" fill="#d8f0ff"/>
<rect x="284.5" y="168.2" width="1.1" height="1.1" fill="#d8f0ff"/>
<rect x="282.8" y="175.4" width="1.1" height="1.1" fill="#d8f0ff"/>
<rect x="282.9" y="188.5" width="1.1" height="1.1" fill="#ffffff"/>
<rect x="286.8" y="183.7" width="1.1" height="1.1" fill="#ffffff"/>
<rect x="286.3" y="184.9" width="1.1" height="1.1" fill="#ffffff"/>
<rect x="284.0" y="169.0" width="1.1" height="1.1" fill="#d8f0ff"/>
<rect x="285.3" y="170.5" width="1.1" height="1.1" fill="#ffffff"/>
<rect x="289.0" y="166.4" width="1.1" height="1.1" fill="#d8f0ff"/>
<rect x="285.2" y="168.1" width="1.1" height="1.1" fill="#bfe6ff"/>
<rect x="289.4" y="167.6" width="1.1" height="1.1" fill="#bfe6ff"/>
<rect x="282.1" y="184.2" width="1.1" height="1.1" fill="#d8f0ff"/>
<rect x="285.9" y="175.1" width="1.1" height="1.1" fill="#bfe6ff"/>
<rect x="284.2" y="173.0" width="1.1" height="1.1" fill="#ffffff"/>
<rect x="288.9" y="169.5" width="1.1" height="1.1" fill="#bfe6ff"/>
<rect x="283.4" y="185.1" width="1.1" height="1.1" fill="#bfe6ff"/>
<rect x="287.9" y="181.8" width="1.1" height="1.1" fill="#ffffff"/>
<rect x="286.6" y="184.7" width="1.1" height="1.1" fill="#bfe6ff"/>
<rect x="287.6" y="183.0" width="1.1" height="1.1" fill="#ffffff"/>
<rect x="283.6" y="179.3" width="1.1" height="1.1" fill="#bfe6ff"/>
<rect x="286.8" y="168.8" width="1.1" height="1.1" fill="#d8f0ff"/>
<rect x="283.5" y="165.6" width="1.1" height="1.1" fill="#bfe6ff"/>
<rect x="285.9" y="185.0" width="1.1" height="1.1" fill="#ffffff"/>
<rect x="285.9" y="172.7" width="1.1" height="1.1" fill="#d8f0ff"/>
<rect x="288.4" y="185.6" width="1.1" height="1.1" fill="#d8f0ff"/>
<rect x="282.7" y="174.2" width="1.1" height="1.1" fill="#d8f0ff"/>
<rect x="283.0" y="180.6" width="1.1" height="1.1" fill="#ffffff"/>
<rect x="292.0" y="164.0" width="5.0" height="26.0" fill="#8a949a"/>
<rect x="293.2" y="185.1" width="1.1" height="1.1" fill="#d8f0ff"/>
<rect x="292.7" y="182.2" width="1.1" height="1.1" fill="#bfe6ff"/>
<rect x="294.6" y="166.1" width="1.1" height="1.1" fill="#bfe6ff"/>
<rect x="295.8" y="188.3" width="1.1" height="1.1" fill="#ffffff"/>
<rect x="293.0" y="182.4" width="1.1" height="1.1" fill="#d8f0ff"/>
<rect x="295.2" y="186.0" width="1.1" height="1.1" fill="#bfe6ff"/>
<rect x="295.2" y="167.4" width="1.1" height="1.1" fill="#ffffff"/>
<rect x="295.8" y="177.4" width="1.1" height="1.1" fill="#bfe6ff"/>
<rect x="292.7" y="184.5" width="1.1" height="1.1" fill="#ffffff"/>
<rect x="292.7" y="188.3" width="1.1" height="1.1" fill="#ffffff"/>
<rect x="294.7" y="169.9" width="1.1" height="1.1" fill="#d8f0ff"/>
<rect x="293.5" y="184.8" width="1.1" height="1.1" fill="#ffffff"/>
<rect x="292.7" y="187.3" width="1.1" height="1.1" fill="#bfe6ff"/>
<rect x="293.3" y="166.4" width="1.1" height="1.1" fill="#bfe6ff"/>
<path d="M30 207.5 V160 Q36 152 44 158 Q50 148 56 156 Q62 152 66 160 Q74 156 80 164 Q90 160 98 166 Q106 164 110 172 H126 Q128 162 133 158 Q139 155 144 159 Q149 163 152 168 Q164 171 176 170 L190 172 Q200 168 214 171 Q230 166 246 171 Q262 167 278 172 Q290 169 300 172 L320 170 V207.5 Z" fill="#141a10"/>
<rect x="38" y="186" width="70" height="7.5" fill="#c9960f" opacity="0.9"/><rect x="126" y="186" width="150" height="6.5" fill="#a8820f" opacity="0.75"/>
<rect x="38" y="176" width="66" height="10" fill="#4a4a12" opacity="0.8"/>
<circle cx="201.6" cy="181.3" r="1.09" fill="#ffb020"/>
<circle cx="62.7" cy="189.4" r="0.63" fill="#ffb020"/>
<circle cx="68.0" cy="181.9" r="1.13" fill="#ff9a20"/>
<circle cx="64.6" cy="174.4" r="0.98" fill="#ffb020"/>
<circle cx="95.1" cy="176.5" r="0.92" fill="#ff9a20"/>
<circle cx="139.1" cy="191.0" r="1.26" fill="#ffd24a"/>
<circle cx="137.1" cy="180.4" r="0.97" fill="#ff9a20"/>
<circle cx="138.9" cy="190.8" r="0.84" fill="#fff0b0"/>
<circle cx="98.5" cy="178.7" r="1.19" fill="#ffe070"/>
<circle cx="182.8" cy="191.7" r="1.17" fill="#fff0b0"/>
<circle cx="256.4" cy="173.1" r="0.70" fill="#ff9a20"/>
<circle cx="212.8" cy="179.1" r="1.06" fill="#ffe070"/>
<circle cx="39.0" cy="174.2" r="0.65" fill="#ffb020"/>
<circle cx="148.6" cy="182.1" r="0.76" fill="#ffd24a"/>
<circle cx="145.4" cy="179.9" r="1.04" fill="#ffe070"/>
<circle cx="246.4" cy="189.7" r="0.62" fill="#ffd24a"/>
<circle cx="202.8" cy="177.3" r="0.79" fill="#ff9a20"/>
<circle cx="177.0" cy="190.5" r="0.67" fill="#ff9a20"/>
<circle cx="67.6" cy="172.3" r="1.27" fill="#ffb020"/>
<circle cx="110.8" cy="178.1" r="0.68" fill="#ffb020"/>
<circle cx="190.5" cy="191.1" r="1.23" fill="#ff9a20"/>
<circle cx="58.0" cy="183.8" r="0.91" fill="#ffb020"/>
<circle cx="169.0" cy="189.7" r="1.00" fill="#ffe070"/>
<circle cx="107.3" cy="186.7" r="0.80" fill="#ff9a20"/>
<circle cx="154.1" cy="185.9" r="1.06" fill="#ffb020"/>
<circle cx="88.3" cy="186.2" r="1.22" fill="#ffe070"/>
<circle cx="115.0" cy="181.6" r="0.62" fill="#fff0b0"/>
<circle cx="122.8" cy="175.8" r="0.87" fill="#ff9a20"/>
<circle cx="188.3" cy="172.2" r="0.71" fill="#fff0b0"/>
<circle cx="283.5" cy="178.5" r="0.94" fill="#fff0b0"/>
<circle cx="110.1" cy="191.8" r="0.64" fill="#fff0b0"/>
<circle cx="41.7" cy="183.0" r="1.21" fill="#ff9a20"/>
<circle cx="150.4" cy="173.2" r="1.18" fill="#ffe070"/>
<circle cx="128.1" cy="187.3" r="0.76" fill="#ff9a20"/>
<circle cx="285.4" cy="186.8" r="0.89" fill="#ffb020"/>
<circle cx="209.7" cy="174.8" r="1.03" fill="#ffb020"/>
<circle cx="257.0" cy="188.4" r="0.67" fill="#ff9a20"/>
<circle cx="258.6" cy="190.4" r="0.79" fill="#ffe070"/>
<circle cx="200.0" cy="184.6" r="0.89" fill="#ffb020"/>
<circle cx="62.9" cy="180.2" r="1.01" fill="#ff9a20"/>
<circle cx="165.4" cy="191.3" r="0.70" fill="#ff9a20"/>
<circle cx="257.0" cy="177.6" r="1.03" fill="#ff9a20"/>
<circle cx="134.7" cy="181.0" r="0.80" fill="#ffe070"/>
<circle cx="127.7" cy="179.1" r="0.99" fill="#ff9a20"/>
<circle cx="136.0" cy="178.4" r="0.87" fill="#ffe070"/>
<circle cx="114.0" cy="182.7" r="0.90" fill="#ffb020"/>
<circle cx="134.0" cy="176.6" r="0.83" fill="#fff0b0"/>
<circle cx="255.3" cy="188.8" r="0.74" fill="#fff0b0"/>
<circle cx="146.9" cy="190.2" r="0.62" fill="#ffd24a"/>
<circle cx="102.7" cy="189.9" r="1.24" fill="#fff0b0"/>
<circle cx="237.1" cy="182.8" r="0.96" fill="#ffe070"/>
<circle cx="170.5" cy="185.7" r="0.92" fill="#ffe070"/>
<circle cx="46.6" cy="185.5" r="1.26" fill="#ffe070"/>
<circle cx="211.9" cy="182.5" r="0.89" fill="#ffd24a"/>
<circle cx="166.2" cy="185.0" r="0.71" fill="#ff9a20"/>
<circle cx="84.9" cy="180.4" r="0.91" fill="#ffe070"/>
<circle cx="198.4" cy="191.9" r="1.08" fill="#fff0b0"/>
<circle cx="230.1" cy="173.8" r="0.82" fill="#fff0b0"/>
<circle cx="290.4" cy="188.5" r="0.72" fill="#ff9a20"/>
<circle cx="206.5" cy="177.9" r="1.17" fill="#fff0b0"/>
<circle cx="293.5" cy="189.8" r="1.04" fill="#ffe070"/>
<circle cx="172.3" cy="188.3" r="0.95" fill="#ffb020"/>
<circle cx="84.9" cy="175.6" r="1.02" fill="#ff9a20"/>
<circle cx="127.8" cy="191.9" r="1.08" fill="#ffd24a"/>
<circle cx="38.8" cy="172.1" r="0.60" fill="#ff9a20"/>
<circle cx="115.2" cy="188.8" r="0.61" fill="#ff9a20"/>
<circle cx="43.7" cy="175.5" r="1.00" fill="#ff9a20"/>
<circle cx="262.5" cy="189.9" r="1.30" fill="#ff9a20"/>
<circle cx="185.4" cy="180.2" r="0.70" fill="#ffd24a"/>
<circle cx="170.8" cy="182.2" r="0.67" fill="#ffd24a"/>
<circle cx="80.3" cy="182.4" r="1.03" fill="#ffe070"/>
<circle cx="245.7" cy="173.2" r="1.08" fill="#ffd24a"/>
<circle cx="186.5" cy="174.9" r="0.85" fill="#ffb020"/>
<circle cx="80.0" cy="177.3" r="1.20" fill="#ffd24a"/>
<circle cx="282.4" cy="173.3" r="0.91" fill="#ffb020"/>
<circle cx="136.3" cy="173.1" r="1.01" fill="#ffe070"/>
<circle cx="285.5" cy="180.8" r="0.77" fill="#ff9a20"/>
<circle cx="94.0" cy="175.2" r="1.20" fill="#ff9a20"/>
<circle cx="117.8" cy="190.0" r="0.81" fill="#ffe070"/>
<circle cx="192.7" cy="191.2" r="1.29" fill="#ffe070"/>
<circle cx="53.6" cy="185.5" r="0.75" fill="#ff9a20"/>
<circle cx="116.4" cy="189.5" r="0.62" fill="#ffe070"/>
<circle cx="261.7" cy="173.7" r="0.85" fill="#ffb020"/>
<circle cx="84.5" cy="191.4" r="0.88" fill="#fff0b0"/>
<circle cx="130.4" cy="178.7" r="0.84" fill="#ffe070"/>
<circle cx="205.3" cy="191.2" r="1.18" fill="#ffe070"/>
<circle cx="127.3" cy="176.9" r="0.93" fill="#ffb020"/>
<circle cx="125.6" cy="180.7" r="1.06" fill="#fff0b0"/>
<circle cx="124.8" cy="175.1" r="0.66" fill="#ffb020"/>
<circle cx="106.1" cy="188.7" r="0.99" fill="#ffb020"/>
<circle cx="318.0" cy="186.3" r="0.70" fill="#8fe8b0"/>
<circle cx="311.2" cy="185.0" r="0.98" fill="#ffd24a"/>
<circle cx="324.8" cy="177.4" r="0.90" fill="#ffd24a"/>
<circle cx="303.6" cy="180.1" r="1.17" fill="#8fe8b0"/>
<circle cx="349.9" cy="182.7" r="0.95" fill="#ffd24a"/>
<circle cx="312.1" cy="176.4" r="0.68" fill="#8fe8b0"/>
<circle cx="335.0" cy="184.2" r="0.93" fill="#d8ffe8"/>
<circle cx="306.2" cy="185.9" r="0.62" fill="#ffd24a"/>
<circle cx="333.1" cy="174.6" r="0.83" fill="#d8ffe8"/>
<circle cx="295.2" cy="175.2" r="0.79" fill="#8fe8b0"/>
<circle cx="329.8" cy="174.0" r="1.08" fill="#ffffff"/>
<circle cx="335.5" cy="175.5" r="0.65" fill="#ffffff"/>
<circle cx="307.3" cy="186.7" r="0.77" fill="#ffd24a"/>
<circle cx="314.2" cy="188.4" r="1.16" fill="#8fe8b0"/>
<circle cx="300.6" cy="178.6" r="1.14" fill="#ffffff"/>
<circle cx="291.5" cy="184.7" r="0.75" fill="#ffd24a"/>
<circle cx="340.8" cy="178.3" r="0.71" fill="#d8ffe8"/>
<circle cx="296.9" cy="188.4" r="1.03" fill="#8fe8b0"/>
<circle cx="292.4" cy="172.7" r="0.86" fill="#8fe8b0"/>
<circle cx="335.4" cy="174.8" r="0.93" fill="#d8ffe8"/>
<circle cx="327.8" cy="188.9" r="0.94" fill="#8fe8b0"/>
<circle cx="333.0" cy="176.6" r="1.00" fill="#ffd24a"/>
<circle cx="324.5" cy="188.8" r="1.10" fill="#d8ffe8"/>
<circle cx="336.6" cy="177.2" r="1.13" fill="#d8ffe8"/>
<circle cx="325.1" cy="184.5" r="1.01" fill="#8fe8b0"/>
<circle cx="292.2" cy="177.7" r="1.05" fill="#ffffff"/>
<circle cx="295.2" cy="184.5" r="1.20" fill="#ffd24a"/>
<circle cx="326.9" cy="176.0" r="0.81" fill="#d8ffe8"/>
<circle cx="347.0" cy="180.0" r="1.01" fill="#ffffff"/>
<circle cx="334.3" cy="186.9" r="0.91" fill="#ffd24a"/>
<path d="M108.5 150 L109.6 118 L110.7 150 Z M113.3 150 L114.5 110 L115.7 150 Z M118.5 150 L119.5 122 L120.5 150 Z" fill="#c08a50" opacity="0.35"/>
<path d="M107 194.5 Q108 165 112 156 Q115 150 118.5 157 Q121 151 123.5 158 Q127 170 127.5 194.5 Z" fill="#b58fae" opacity="0.95"/>
<path d="M111 194 Q113 170 116 160 Q119 170 122 194 Z" fill="#e4cbe0" opacity="0.75"/>
<rect x="30" y="194.5" width="330" height="13" fill="url(#water)"/>
<rect x="30" y="193.3" width="270" height="1.4" fill="#7a5a20" opacity="0.8"/>
<rect x="209.1" y="198.5" width="1.2" height="9.7" fill="#e8a040" opacity="0.65"/>
<rect x="87.3" y="196.8" width="2.5" height="8.3" fill="#e8a040" opacity="0.84"/>
<rect x="199.4" y="198.9" width="1.8" height="6.0" fill="#ffe8b8" opacity="0.59"/>
<rect x="63.1" y="196.4" width="1.9" height="9.2" fill="#ffe8b8" opacity="0.72"/>
<rect x="99.5" y="198.1" width="1.2" height="5.8" fill="#e8a040" opacity="0.71"/>
<rect x="214.5" y="197.8" width="1.0" height="6.4" fill="#ffe8b8" opacity="0.70"/>
<rect x="69.5" y="198.0" width="1.6" height="5.9" fill="#ffe8b8" opacity="0.84"/>
<rect x="249.9" y="196.3" width="1.5" height="6.7" fill="#ffe8b8" opacity="0.59"/>
<rect x="91.6" y="196.9" width="0.9" height="5.7" fill="#ff9c30" opacity="0.57"/>
<rect x="280.7" y="197.4" width="1.1" height="7.2" fill="#ffffff" opacity="0.52"/>
<rect x="58.0" y="196.3" width="0.8" height="9.3" fill="#ffffff" opacity="0.84"/>
<rect x="180.9" y="198.9" width="1.0" height="7.9" fill="#ffffff" opacity="0.76"/>
<rect x="120.5" y="197.9" width="1.4" height="8.8" fill="#ffcf70" opacity="0.82"/>
<rect x="203.2" y="196.2" width="1.3" height="9.5" fill="#ffe8b8" opacity="0.46"/>
<rect x="138.8" y="196.6" width="1.1" height="8.8" fill="#ff9c30" opacity="0.79"/>
<rect x="271.7" y="198.2" width="1.1" height="7.0" fill="#ff9c30" opacity="0.52"/>
<rect x="246.3" y="196.4" width="1.4" height="10.5" fill="#ff9c30" opacity="0.79"/>
<rect x="103.4" y="197.7" width="0.9" height="8.8" fill="#ffcf70" opacity="0.78"/>
<rect x="216.4" y="197.5" width="2.4" height="8.0" fill="#ffe8b8" opacity="0.51"/>
<rect x="114.9" y="196.4" width="1.8" height="6.4" fill="#ffcf70" opacity="0.51"/>
<rect x="199.2" y="198.6" width="1.5" height="7.9" fill="#ffcf70" opacity="0.54"/>
<rect x="133.1" y="198.6" width="0.9" height="9.7" fill="#e8a040" opacity="0.62"/>
<rect x="110.8" y="198.1" width="2.0" height="10.3" fill="#e8a040" opacity="0.48"/>
<rect x="42.2" y="198.7" width="2.5" height="6.0" fill="#ffe8b8" opacity="0.57"/>
<rect x="150.8" y="197.7" width="1.8" height="7.8" fill="#ff9c30" opacity="0.67"/>
<rect x="169.2" y="198.7" width="1.6" height="10.2" fill="#e8a040" opacity="0.84"/>
<rect x="280.5" y="198.2" width="1.9" height="7.0" fill="#ffcf70" opacity="0.71"/>
<rect x="181.3" y="197.4" width="1.6" height="8.9" fill="#ff9c30" opacity="0.57"/>
<rect x="125.9" y="198.5" width="2.4" height="6.3" fill="#ffcf70" opacity="0.75"/>
<rect x="212.8" y="197.1" width="1.1" height="8.5" fill="#e8a040" opacity="0.62"/>
<rect x="172.5" y="196.8" width="1.8" height="6.4" fill="#ffffff" opacity="0.84"/>
<rect x="90.7" y="198.6" width="2.1" height="6.5" fill="#ffe8b8" opacity="0.49"/>
<rect x="172.7" y="196.7" width="1.3" height="7.7" fill="#ffffff" opacity="0.67"/>
<rect x="214.2" y="197.7" width="2.1" height="10.1" fill="#e8a040" opacity="0.72"/>
<rect x="240.1" y="197.7" width="1.0" height="9.3" fill="#e8a040" opacity="0.75"/>
<rect x="68.7" y="196.3" width="2.6" height="10.0" fill="#e8a040" opacity="0.61"/>
<rect x="82.8" y="197.4" width="2.5" height="5.6" fill="#e8a040" opacity="0.60"/>
<rect x="194.7" y="197.1" width="1.5" height="5.1" fill="#ffcf70" opacity="0.69"/>
<rect x="93.3" y="197.3" width="1.3" height="10.3" fill="#ffe8b8" opacity="0.70"/>
<rect x="258.0" y="196.5" width="1.8" height="9.5" fill="#ff9c30" opacity="0.59"/>
<rect x="230.9" y="196.4" width="2.0" height="7.2" fill="#ff9c30" opacity="0.74"/>
<rect x="277.0" y="198.4" width="2.1" height="7.1" fill="#ffcf70" opacity="0.59"/>
<rect x="121.8" y="198.8" width="1.9" height="9.1" fill="#ffcf70" opacity="0.55"/>
<rect x="88.3" y="197.3" width="1.6" height="9.7" fill="#e8a040" opacity="0.65"/>
<rect x="58.4" y="197.7" width="1.3" height="6.7" fill="#ffe8b8" opacity="0.72"/>
<rect x="135.2" y="197.6" width="1.1" height="9.1" fill="#ff9c30" opacity="0.77"/>
<rect x="176" y="197" width="31" height="10.5" fill="#4f7fc0" opacity="0.75"/><rect x="228" y="198" width="24" height="9.5" fill="#3aa0a8" opacity="0.7"/>
<path d="M298 191 H360 V207.5 H262 V200 H298 Z" fill="#4a3c3a"/><path d="M298 191 H360 V193 H298 Z" fill="#6a5a50"/>
<path d="M360 75 Q352 78 349 88 Q342 90 342 100 Q334 102 334 112 Q322 116 322 128 Q312 132 314 142 Q304 148 304 158 Q300 166 304 176 L312 190 L360 192 Z" fill="#10160e"/>
<path d="M346 120 Q356 112 360 116 V170 Q350 160 346 120 Z" fill="#2a2410" opacity="0.8"/>
<path d="M0 0 H5 L1.5 40 L0 60 Z" fill="#2f1f18"/>
<path d="M11.5 0 H16 L15 207.5 H9 Z" fill="#2f1f18"/>
<path d="M32.5 0 H36.5 L31 120 L33 207.5 H22 L27 120 Z" fill="#2f1f18"/>
<path d="M43 0 H46.5 L41 100 L43 160 H37 L38 100 Z" fill="#2f1f18"/>
<path d="M50.5 0 H54 L47 70 L44 100 H40.5 L44 60 Z" fill="#2f1f18"/>
<path d="M59 0 H64 L51 60 L44 100 L46 150 L36 207.5 H19 L33 150 L38 100 L46 55 Z" fill="#2c1d14"/>
<path d="M0 70 Q6 60 12 72 L14 207.5 H0 Z" fill="#1a1510" opacity="0.95"/>
<path d="M20.5 44.0 Q13.9 44.5 8.4 55.0" stroke="#131914" stroke-width="1.8" fill="none" stroke-linecap="round"/>
<path d="M14.8 46.5 l-1.5 3.3 M14.8 46.5 l1.8 3.0" stroke="#131914" stroke-width="1.2" fill="none"/>
<path d="M12.4 48.9 l-1.5 2.6 M12.4 48.9 l1.8 2.3" stroke="#131914" stroke-width="1.2" fill="none"/>
<path d="M10.1 52.1 l-1.5 2.0 M10.1 52.1 l1.8 1.8" stroke="#131914" stroke-width="1.2" fill="none"/>
<path d="M20.5 44.0 Q15.1 42.5 10.7 49.4" stroke="#131914" stroke-width="1.8" fill="none" stroke-linecap="round"/>
<path d="M15.8 44.4 l-1.5 3.3 M15.8 44.4 l1.8 3.0" stroke="#131914" stroke-width="1.2" fill="none"/>
<path d="M13.9 45.6 l-1.5 2.6 M13.9 45.6 l1.8 2.3" stroke="#131914" stroke-width="1.2" fill="none"/>
<path d="M12.0 47.5 l-1.5 2.0 M12.0 47.5 l1.8 1.8" stroke="#131914" stroke-width="1.2" fill="none"/>
<path d="M20.5 44.0 Q14.9 40.3 10.3 45.9" stroke="#131914" stroke-width="1.8" fill="none" stroke-linecap="round"/>
<path d="M15.7 42.6 l-1.5 3.3 M15.7 42.6 l1.8 3.0" stroke="#131914" stroke-width="1.2" fill="none"/>
<path d="M13.6 43.1 l-1.5 2.6 M13.6 43.1 l1.8 2.3" stroke="#131914" stroke-width="1.2" fill="none"/>
<path d="M11.7 44.4 l-1.5 2.0 M11.7 44.4 l1.8 1.8" stroke="#131914" stroke-width="1.2" fill="none"/>
<path d="M20.5 44.0 Q16.2 38.8 12.7 41.7" stroke="#131914" stroke-width="1.8" fill="none" stroke-linecap="round"/>
<path d="M16.8 41.0 l-1.5 3.3 M16.8 41.0 l1.8 3.0" stroke="#131914" stroke-width="1.2" fill="none"/>
<path d="M15.2 40.7 l-1.5 2.6 M15.2 40.7 l1.8 2.3" stroke="#131914" stroke-width="1.2" fill="none"/>
<path d="M13.7 41.0 l-1.5 2.0 M13.7 41.0 l1.8 1.8" stroke="#131914" stroke-width="1.2" fill="none"/>
<path d="M20.5 44.0 Q17.4 36.9 14.8 37.3" stroke="#131914" stroke-width="1.8" fill="none" stroke-linecap="round"/>
<path d="M17.8 39.1 l-1.5 3.3 M17.8 39.1 l1.8 3.0" stroke="#131914" stroke-width="1.2" fill="none"/>
<path d="M16.7 37.9 l-1.5 2.6 M16.7 37.9 l1.8 2.3" stroke="#131914" stroke-width="1.2" fill="none"/>
<path d="M15.6 37.3 l-1.5 2.0 M15.6 37.3 l1.8 1.8" stroke="#131914" stroke-width="1.2" fill="none"/>
<path d="M20.5 44.0 Q19.3 35.3 18.3 32.8" stroke="#131914" stroke-width="1.8" fill="none" stroke-linecap="round"/>
<path d="M19.5 37.4 l-1.5 3.3 M19.5 37.4 l1.8 3.0" stroke="#131914" stroke-width="1.2" fill="none"/>
<path d="M19.0 35.3 l-1.5 2.6 M19.0 35.3 l1.8 2.3" stroke="#131914" stroke-width="1.2" fill="none"/>
<path d="M18.6 33.7 l-1.5 2.0 M18.6 33.7 l1.8 1.8" stroke="#131914" stroke-width="1.2" fill="none"/>
<path d="M20.5 44.0 Q21.7 35.5 22.6 33.0" stroke="#131914" stroke-width="1.8" fill="none" stroke-linecap="round"/>
<path d="M21.5 37.5 l-1.5 3.3 M21.5 37.5 l1.8 3.0" stroke="#131914" stroke-width="1.2" fill="none"/>
<path d="M21.9 35.5 l-1.5 2.6 M21.9 35.5 l1.8 2.3" stroke="#131914" stroke-width="1.2" fill="none"/>
<path d="M22.4 33.9 l-1.5 2.0 M22.4 33.9 l1.8 1.8" stroke="#131914" stroke-width="1.2" fill="none"/>
<path d="M20.5 44.0 Q23.2 37.8 25.4 38.2" stroke="#131914" stroke-width="1.8" fill="none" stroke-linecap="round"/>
<path d="M22.8 39.8 l-1.5 3.3 M22.8 39.8 l1.8 3.0" stroke="#131914" stroke-width="1.2" fill="none"/>
<path d="M23.8 38.7 l-1.5 2.6 M23.8 38.7 l1.8 2.3" stroke="#131914" stroke-width="1.2" fill="none"/>
<path d="M24.8 38.2 l-1.5 2.0 M24.8 38.2 l1.8 1.8" stroke="#131914" stroke-width="1.2" fill="none"/>
<path d="M20.5 44.0 Q24.9 38.8 28.4 41.7" stroke="#131914" stroke-width="1.8" fill="none" stroke-linecap="round"/>
<path d="M24.3 41.0 l-1.5 3.3 M24.3 41.0 l1.8 3.0" stroke="#131914" stroke-width="1.2" fill="none"/>
<path d="M25.8 40.7 l-1.5 2.6 M25.8 40.7 l1.8 2.3" stroke="#131914" stroke-width="1.2" fill="none"/>
<path d="M27.3 41.0 l-1.5 2.0 M27.3 41.0 l1.8 1.8" stroke="#131914" stroke-width="1.2" fill="none"/>
<path d="M20.5 44.0 Q26.9 39.8 32.2 46.2" stroke="#131914" stroke-width="1.8" fill="none" stroke-linecap="round"/>
<path d="M26.0 42.4 l-1.5 3.3 M26.0 42.4 l1.8 3.0" stroke="#131914" stroke-width="1.2" fill="none"/>
<path d="M28.3 43.0 l-1.5 2.6 M28.3 43.0 l1.8 2.3" stroke="#131914" stroke-width="1.2" fill="none"/>
<path d="M30.6 44.5 l-1.5 2.0 M30.6 44.5 l1.8 1.8" stroke="#131914" stroke-width="1.2" fill="none"/>
<path d="M20.5 44.0 Q27.1 42.2 32.5 50.6" stroke="#131914" stroke-width="1.8" fill="none" stroke-linecap="round"/>
<path d="M26.2 44.4 l-1.5 3.3 M26.2 44.4 l1.8 3.0" stroke="#131914" stroke-width="1.2" fill="none"/>
<path d="M28.5 46.0 l-1.5 2.6 M28.5 46.0 l1.8 2.3" stroke="#131914" stroke-width="1.2" fill="none"/>
<path d="M30.8 48.3 l-1.5 2.0 M30.8 48.3 l1.8 1.8" stroke="#131914" stroke-width="1.2" fill="none"/>
<path d="M20.5 44.0 Q26.2 44.4 30.9 53.5" stroke="#131914" stroke-width="1.8" fill="none" stroke-linecap="round"/>
<path d="M25.4 46.1 l-1.5 3.3 M25.4 46.1 l1.8 3.0" stroke="#131914" stroke-width="1.2" fill="none"/>
<path d="M27.5 48.2 l-1.5 2.6 M27.5 48.2 l1.8 2.3" stroke="#131914" stroke-width="1.2" fill="none"/>
<path d="M29.4 50.9 l-1.5 2.0 M29.4 50.9 l1.8 1.8" stroke="#131914" stroke-width="1.2" fill="none"/>
<circle cx="20.5" cy="44" r="2.9" fill="#131914"/>
<path d="M32.0 50.0 Q26.6 50.4 22.2 59.0" stroke="#131914" stroke-width="1.8" fill="none" stroke-linecap="round"/>
<path d="M27.3 52.0 l-1.5 3.3 M27.3 52.0 l1.8 3.0" stroke="#131914" stroke-width="1.2" fill="none"/>
<path d="M25.4 54.0 l-1.5 2.6 M25.4 54.0 l1.8 2.3" stroke="#131914" stroke-width="1.2" fill="none"/>
<path d="M23.5 56.6 l-1.5 2.0 M23.5 56.6 l1.8 1.8" stroke="#131914" stroke-width="1.2" fill="none"/>
<path d="M32.0 50.0 Q26.8 48.6 22.5 55.2" stroke="#131914" stroke-width="1.8" fill="none" stroke-linecap="round"/>
<path d="M27.5 50.4 l-1.5 3.3 M27.5 50.4 l1.8 3.0" stroke="#131914" stroke-width="1.2" fill="none"/>
<path d="M25.6 51.6 l-1.5 2.6 M25.6 51.6 l1.8 2.3" stroke="#131914" stroke-width="1.2" fill="none"/>
<path d="M23.8 53.4 l-1.5 2.0 M23.8 53.4 l1.8 1.8" stroke="#131914" stroke-width="1.2" fill="none"/>
<path d="M32.0 50.0 Q26.0 46.1 21.2 52.0" stroke="#131914" stroke-width="1.8" fill="none" stroke-linecap="round"/>
<path d="M26.9 48.5 l-1.5 3.3 M26.9 48.5 l1.8 3.0" stroke="#131914" stroke-width="1.2" fill="none"/>
<path d="M24.7 49.1 l-1.5 2.6 M24.7 49.1 l1.8 2.3" stroke="#131914" stroke-width="1.2" fill="none"/>
<path d="M22.6 50.5 l-1.5 2.0 M22.6 50.5 l1.8 1.8" stroke="#131914" stroke-width="1.2" fill="none"/>
<path d="M32.0 50.0 Q27.7 44.9 24.2 47.7" stroke="#131914" stroke-width="1.8" fill="none" stroke-linecap="round"/>
<path d="M28.3 47.0 l-1.5 3.3 M28.3 47.0 l1.8 3.0" stroke="#131914" stroke-width="1.2" fill="none"/>
<path d="M26.8 46.7 l-1.5 2.6 M26.8 46.7 l1.8 2.3" stroke="#131914" stroke-width="1.2" fill="none"/>
<path d="M25.3 47.1 l-1.5 2.0 M25.3 47.1 l1.8 1.8" stroke="#131914" stroke-width="1.2" fill="none"/>
<path d="M32.0 50.0 Q28.8 42.7 26.2 43.1" stroke="#131914" stroke-width="1.8" fill="none" stroke-linecap="round"/>
<path d="M29.2 45.0 l-1.5 3.3 M29.2 45.0 l1.8 3.0" stroke="#131914" stroke-width="1.2" fill="none"/>
<path d="M28.1 43.8 l-1.5 2.6 M28.1 43.8 l1.8 2.3" stroke="#131914" stroke-width="1.2" fill="none"/>
<path d="M27.0 43.2 l-1.5 2.0 M27.0 43.2 l1.8 1.8" stroke="#131914" stroke-width="1.2" fill="none"/>
<path d="M32.0 50.0 Q31.0 42.5 30.1 40.4" stroke="#131914" stroke-width="1.8" fill="none" stroke-linecap="round"/>
<path d="M31.1 44.3 l-1.5 3.3 M31.1 44.3 l1.8 3.0" stroke="#131914" stroke-width="1.2" fill="none"/>
<path d="M30.7 42.5 l-1.5 2.6 M30.7 42.5 l1.8 2.3" stroke="#131914" stroke-width="1.2" fill="none"/>
<path d="M30.4 41.1 l-1.5 2.0 M30.4 41.1 l1.8 1.8" stroke="#131914" stroke-width="1.2" fill="none"/>
<path d="M32.0 50.0 Q32.9 43.6 33.6 41.8" stroke="#131914" stroke-width="1.8" fill="none" stroke-linecap="round"/>
<path d="M32.8 45.2 l-1.5 3.3 M32.8 45.2 l1.8 3.0" stroke="#131914" stroke-width="1.2" fill="none"/>
<path d="M33.1 43.6 l-1.5 2.6 M33.1 43.6 l1.8 2.3" stroke="#131914" stroke-width="1.2" fill="none"/>
<path d="M33.4 42.4 l-1.5 2.0 M33.4 42.4 l1.8 1.8" stroke="#131914" stroke-width="1.2" fill="none"/>
<path d="M32.0 50.0 Q34.7 43.7 37.0 44.1" stroke="#131914" stroke-width="1.8" fill="none" stroke-linecap="round"/>
<path d="M34.4 45.7 l-1.5 3.3 M34.4 45.7 l1.8 3.0" stroke="#131914" stroke-width="1.2" fill="none"/>
<path d="M35.4 44.7 l-1.5 2.6 M35.4 44.7 l1.8 2.3" stroke="#131914" stroke-width="1.2" fill="none"/>
<path d="M36.3 44.1 l-1.5 2.0 M36.3 44.1 l1.8 1.8" stroke="#131914" stroke-width="1.2" fill="none"/>
<path d="M32.0 50.0 Q36.1 45.1 39.4 47.9" stroke="#131914" stroke-width="1.8" fill="none" stroke-linecap="round"/>
<path d="M35.5 47.2 l-1.5 3.3 M35.5 47.2 l1.8 3.0" stroke="#131914" stroke-width="1.2" fill="none"/>
<path d="M37.0 46.9 l-1.5 2.6 M37.0 46.9 l1.8 2.3" stroke="#131914" stroke-width="1.2" fill="none"/>
<path d="M38.4 47.2 l-1.5 2.0 M38.4 47.2 l1.8 1.8" stroke="#131914" stroke-width="1.2" fill="none"/>
<path d="M32.0 50.0 Q38.0 46.1 43.0 52.0" stroke="#131914" stroke-width="1.8" fill="none" stroke-linecap="round"/>
<path d="M37.2 48.5 l-1.5 3.3 M37.2 48.5 l1.8 3.0" stroke="#131914" stroke-width="1.2" fill="none"/>
<path d="M39.4 49.1 l-1.5 2.6 M39.4 49.1 l1.8 2.3" stroke="#131914" stroke-width="1.2" fill="none"/>
<path d="M41.5 50.5 l-1.5 2.0 M41.5 50.5 l1.8 1.8" stroke="#131914" stroke-width="1.2" fill="none"/>
<path d="M32.0 50.0 Q37.9 48.4 42.8 55.9" stroke="#131914" stroke-width="1.8" fill="none" stroke-linecap="round"/>
<path d="M37.1 50.4 l-1.5 3.3 M37.1 50.4 l1.8 3.0" stroke="#131914" stroke-width="1.2" fill="none"/>
<path d="M39.2 51.8 l-1.5 2.6 M39.2 51.8 l1.8 2.3" stroke="#131914" stroke-width="1.2" fill="none"/>
<path d="M41.3 53.9 l-1.5 2.0 M41.3 53.9 l1.8 1.8" stroke="#131914" stroke-width="1.2" fill="none"/>
<path d="M32.0 50.0 Q36.7 50.3 40.6 57.8" stroke="#131914" stroke-width="1.8" fill="none" stroke-linecap="round"/>
<path d="M36.1 51.8 l-1.5 3.3 M36.1 51.8 l1.8 3.0" stroke="#131914" stroke-width="1.2" fill="none"/>
<path d="M37.8 53.5 l-1.5 2.6 M37.8 53.5 l1.8 2.3" stroke="#131914" stroke-width="1.2" fill="none"/>
<path d="M39.4 55.8 l-1.5 2.0 M39.4 55.8 l1.8 1.8" stroke="#131914" stroke-width="1.2" fill="none"/>
<circle cx="32" cy="50" r="2.6" fill="#131914"/>
<path d="M43.0 66.0 Q31.9 66.8 22.9 83.4" stroke="#131914" stroke-width="2.3" fill="none" stroke-linecap="round"/>
<path d="M33.5 69.9 l-1.5 3.3 M33.5 69.9 l1.8 3.0" stroke="#131914" stroke-width="1.2" fill="none"/>
<path d="M29.5 73.7 l-1.5 2.6 M29.5 73.7 l1.8 2.3" stroke="#131914" stroke-width="1.2" fill="none"/>
<path d="M25.7 78.8 l-1.5 2.0 M25.7 78.8 l1.8 1.8" stroke="#131914" stroke-width="1.2" fill="none"/>
<path d="M43.0 66.0 Q30.6 63.5 20.4 79.0" stroke="#131914" stroke-width="2.3" fill="none" stroke-linecap="round"/>
<path d="M32.3 67.4 l-1.5 3.3 M32.3 67.4 l1.8 3.0" stroke="#131914" stroke-width="1.2" fill="none"/>
<path d="M27.8 70.4 l-1.5 2.6 M27.8 70.4 l1.8 2.3" stroke="#131914" stroke-width="1.2" fill="none"/>
<path d="M23.5 74.8 l-1.5 2.0 M23.5 74.8 l1.8 1.8" stroke="#131914" stroke-width="1.2" fill="none"/>
<path d="M43.0 66.0 Q30.4 59.9 20.1 72.8" stroke="#131914" stroke-width="2.3" fill="none" stroke-linecap="round"/>
<path d="M32.1 64.4 l-1.5 3.3 M32.1 64.4 l1.8 3.0" stroke="#131914" stroke-width="1.2" fill="none"/>
<path d="M27.6 66.1 l-1.5 2.6 M27.6 66.1 l1.8 2.3" stroke="#131914" stroke-width="1.2" fill="none"/>
<path d="M23.2 69.4 l-1.5 2.0 M23.2 69.4 l1.8 1.8" stroke="#131914" stroke-width="1.2" fill="none"/>
<path d="M43.0 66.0 Q31.2 56.3 21.5 65.7" stroke="#131914" stroke-width="2.3" fill="none" stroke-linecap="round"/>
<path d="M32.8 61.2 l-1.5 3.3 M32.8 61.2 l1.8 3.0" stroke="#131914" stroke-width="1.2" fill="none"/>
<path d="M28.5 61.5 l-1.5 2.6 M28.5 61.5 l1.8 2.3" stroke="#131914" stroke-width="1.2" fill="none"/>
<path d="M24.5 63.3 l-1.5 2.0 M24.5 63.3 l1.8 1.8" stroke="#131914" stroke-width="1.2" fill="none"/>
<path d="M43.0 66.0 Q33.8 54.0 26.2 58.8" stroke="#131914" stroke-width="2.3" fill="none" stroke-linecap="round"/>
<path d="M35.0 58.6 l-1.5 3.3 M35.0 58.6 l1.8 3.0" stroke="#131914" stroke-width="1.2" fill="none"/>
<path d="M31.7 57.5 l-1.5 2.6 M31.7 57.5 l1.8 2.3" stroke="#131914" stroke-width="1.2" fill="none"/>
<path d="M28.5 57.8 l-1.5 2.0 M28.5 57.8 l1.8 1.8" stroke="#131914" stroke-width="1.2" fill="none"/>
<path d="M43.0 66.0 Q36.5 52.0 31.2 52.6" stroke="#131914" stroke-width="2.3" fill="none" stroke-linecap="round"/>
<path d="M37.4 56.3 l-1.5 3.3 M37.4 56.3 l1.8 3.0" stroke="#131914" stroke-width="1.2" fill="none"/>
<path d="M35.1 54.0 l-1.5 2.6 M35.1 54.0 l1.8 2.3" stroke="#131914" stroke-width="1.2" fill="none"/>
<path d="M32.8 52.7 l-1.5 2.0 M32.8 52.7 l1.8 1.8" stroke="#131914" stroke-width="1.2" fill="none"/>
<path d="M43.0 66.0 Q40.0 52.2 37.5 49.2" stroke="#131914" stroke-width="2.3" fill="none" stroke-linecap="round"/>
<path d="M40.4 55.8 l-1.5 3.3 M40.4 55.8 l1.8 3.0" stroke="#131914" stroke-width="1.2" fill="none"/>
<path d="M39.3 52.6 l-1.5 2.6 M39.3 52.6 l1.8 2.3" stroke="#131914" stroke-width="1.2" fill="none"/>
<path d="M38.3 50.4 l-1.5 2.0 M38.3 50.4 l1.8 1.8" stroke="#131914" stroke-width="1.2" fill="none"/>
<path d="M43.0 66.0 Q43.0 49.1 43.0 41.8" stroke="#131914" stroke-width="2.3" fill="none" stroke-linecap="round"/>
<path d="M43.0 52.7 l-1.5 3.3 M43.0 52.7 l1.8 3.0" stroke="#131914" stroke-width="1.2" fill="none"/>
<path d="M43.0 48.1 l-1.5 2.6 M43.0 48.1 l1.8 2.3" stroke="#131914" stroke-width="1.2" fill="none"/>
<path d="M43.0 44.2 l-1.5 2.0 M43.0 44.2 l1.8 1.8" stroke="#131914" stroke-width="1.2" fill="none"/>
<path d="M43.0 66.0 Q46.4 50.7 49.1 47.4" stroke="#131914" stroke-width="2.3" fill="none" stroke-linecap="round"/>
<path d="M45.9 54.7 l-1.5 3.3 M45.9 54.7 l1.8 3.0" stroke="#131914" stroke-width="1.2" fill="none"/>
<path d="M47.1 51.2 l-1.5 2.6 M47.1 51.2 l1.8 2.3" stroke="#131914" stroke-width="1.2" fill="none"/>
<path d="M48.3 48.7 l-1.5 2.0 M48.3 48.7 l1.8 1.8" stroke="#131914" stroke-width="1.2" fill="none"/>
<path d="M43.0 66.0 Q48.8 53.4 53.6 53.9" stroke="#131914" stroke-width="2.3" fill="none" stroke-linecap="round"/>
<path d="M48.0 57.3 l-1.5 3.3 M48.0 57.3 l1.8 3.0" stroke="#131914" stroke-width="1.2" fill="none"/>
<path d="M50.2 55.2 l-1.5 2.6 M50.2 55.2 l1.8 2.3" stroke="#131914" stroke-width="1.2" fill="none"/>
<path d="M52.2 54.1 l-1.5 2.0 M52.2 54.1 l1.8 1.8" stroke="#131914" stroke-width="1.2" fill="none"/>
<path d="M43.0 66.0 Q52.4 53.8 60.1 58.7" stroke="#131914" stroke-width="2.3" fill="none" stroke-linecap="round"/>
<path d="M51.1 58.5 l-1.5 3.3 M51.1 58.5 l1.8 3.0" stroke="#131914" stroke-width="1.2" fill="none"/>
<path d="M54.5 57.3 l-1.5 2.6 M54.5 57.3 l1.8 2.3" stroke="#131914" stroke-width="1.2" fill="none"/>
<path d="M57.8 57.6 l-1.5 2.0 M57.8 57.6 l1.8 1.8" stroke="#131914" stroke-width="1.2" fill="none"/>
<path d="M43.0 66.0 Q56.2 55.2 66.9 65.7" stroke="#131914" stroke-width="2.3" fill="none" stroke-linecap="round"/>
<path d="M54.4 60.6 l-1.5 3.3 M54.4 60.6 l1.8 3.0" stroke="#131914" stroke-width="1.2" fill="none"/>
<path d="M59.1 61.0 l-1.5 2.6 M59.1 61.0 l1.8 2.3" stroke="#131914" stroke-width="1.2" fill="none"/>
<path d="M63.7 63.0 l-1.5 2.0 M63.7 63.0 l1.8 1.8" stroke="#131914" stroke-width="1.2" fill="none"/>
<path d="M43.0 66.0 Q54.1 60.7 63.1 72.0" stroke="#131914" stroke-width="2.3" fill="none" stroke-linecap="round"/>
<path d="M52.6 64.6 l-1.5 3.3 M52.6 64.6 l1.8 3.0" stroke="#131914" stroke-width="1.2" fill="none"/>
<path d="M56.6 66.1 l-1.5 2.6 M56.6 66.1 l1.8 2.3" stroke="#131914" stroke-width="1.2" fill="none"/>
<path d="M60.4 69.0 l-1.5 2.0 M60.4 69.0 l1.8 1.8" stroke="#131914" stroke-width="1.2" fill="none"/>
<path d="M43.0 66.0 Q54.6 63.7 64.2 78.2" stroke="#131914" stroke-width="2.3" fill="none" stroke-linecap="round"/>
<path d="M53.1 67.3 l-1.5 3.3 M53.1 67.3 l1.8 3.0" stroke="#131914" stroke-width="1.2" fill="none"/>
<path d="M57.2 70.1 l-1.5 2.6 M57.2 70.1 l1.8 2.3" stroke="#131914" stroke-width="1.2" fill="none"/>
<path d="M61.3 74.2 l-1.5 2.0 M61.3 74.2 l1.8 1.8" stroke="#131914" stroke-width="1.2" fill="none"/>
<path d="M43.0 66.0 Q55.8 66.9 66.3 86.1" stroke="#131914" stroke-width="2.3" fill="none" stroke-linecap="round"/>
<path d="M54.1 70.5 l-1.5 3.3 M54.1 70.5 l1.8 3.0" stroke="#131914" stroke-width="1.2" fill="none"/>
<path d="M58.7 74.9 l-1.5 2.6 M58.7 74.9 l1.8 2.3" stroke="#131914" stroke-width="1.2" fill="none"/>
<path d="M63.1 80.8 l-1.5 2.0 M63.1 80.8 l1.8 1.8" stroke="#131914" stroke-width="1.2" fill="none"/>
<circle cx="43" cy="66" r="5.9" fill="#131914"/>
<path d="M9.0 96.0 Q-1.1 96.7 -9.5 113.8" stroke="#131914" stroke-width="2.4" fill="none" stroke-linecap="round"/>
<path d="M0.2 100.0 l-1.5 3.3 M0.2 100.0 l1.8 3.0" stroke="#131914" stroke-width="1.2" fill="none"/>
<path d="M-3.4 103.9 l-1.5 2.6 M-3.4 103.9 l1.8 2.3" stroke="#131914" stroke-width="1.2" fill="none"/>
<path d="M-6.9 109.0 l-1.5 2.0 M-6.9 109.0 l1.8 1.8" stroke="#131914" stroke-width="1.2" fill="none"/>
<path d="M9.0 96.0 Q-1.8 93.4 -10.6 108.4" stroke="#131914" stroke-width="2.4" fill="none" stroke-linecap="round"/>
<path d="M-0.3 97.2 l-1.5 3.3 M-0.3 97.2 l1.8 3.0" stroke="#131914" stroke-width="1.2" fill="none"/>
<path d="M-4.2 100.0 l-1.5 2.6 M-4.2 100.0 l1.8 2.3" stroke="#131914" stroke-width="1.2" fill="none"/>
<path d="M-7.9 104.3 l-1.5 2.0 M-7.9 104.3 l1.8 1.8" stroke="#131914" stroke-width="1.2" fill="none"/>
<path d="M9.0 96.0 Q-2.1 89.5 -11.1 102.0" stroke="#131914" stroke-width="2.4" fill="none" stroke-linecap="round"/>
<path d="M-0.6 94.0 l-1.5 3.3 M-0.6 94.0 l1.8 3.0" stroke="#131914" stroke-width="1.2" fill="none"/>
<path d="M-4.5 95.6 l-1.5 2.6 M-4.5 95.6 l1.8 2.3" stroke="#131914" stroke-width="1.2" fill="none"/>
<path d="M-8.4 98.7 l-1.5 2.0 M-8.4 98.7 l1.8 1.8" stroke="#131914" stroke-width="1.2" fill="none"/>
<path d="M9.0 96.0 Q0.2 86.9 -7.0 94.4" stroke="#131914" stroke-width="2.4" fill="none" stroke-linecap="round"/>
<path d="M1.4 91.2 l-1.5 3.3 M1.4 91.2 l1.8 3.0" stroke="#131914" stroke-width="1.2" fill="none"/>
<path d="M-1.8 91.2 l-1.5 2.6 M-1.8 91.2 l1.8 2.3" stroke="#131914" stroke-width="1.2" fill="none"/>
<path d="M-4.8 92.5 l-1.5 2.0 M-4.8 92.5 l1.8 1.8" stroke="#131914" stroke-width="1.2" fill="none"/>
<path d="M9.0 96.0 Q2.0 83.3 -3.8 86.5" stroke="#131914" stroke-width="2.4" fill="none" stroke-linecap="round"/>
<path d="M2.9 87.8 l-1.5 3.3 M2.9 87.8 l1.8 3.0" stroke="#131914" stroke-width="1.2" fill="none"/>
<path d="M0.4 86.2 l-1.5 2.6 M0.4 86.2 l1.8 2.3" stroke="#131914" stroke-width="1.2" fill="none"/>
<path d="M-2.0 85.9 l-1.5 2.0 M-2.0 85.9 l1.8 1.8" stroke="#131914" stroke-width="1.2" fill="none"/>
<path d="M9.0 96.0 Q5.3 81.8 2.3 79.9" stroke="#131914" stroke-width="2.4" fill="none" stroke-linecap="round"/>
<path d="M5.8 85.7 l-1.5 3.3 M5.8 85.7 l1.8 3.0" stroke="#131914" stroke-width="1.2" fill="none"/>
<path d="M4.5 82.7 l-1.5 2.6 M4.5 82.7 l1.8 2.3" stroke="#131914" stroke-width="1.2" fill="none"/>
<path d="M3.3 80.7 l-1.5 2.0 M3.3 80.7 l1.8 1.8" stroke="#131914" stroke-width="1.2" fill="none"/>
<path d="M9.0 96.0 Q9.0 79.4 9.0 72.3" stroke="#131914" stroke-width="2.4" fill="none" stroke-linecap="round"/>
<path d="M9.0 83.0 l-1.5 3.3 M9.0 83.0 l1.8 3.0" stroke="#131914" stroke-width="1.2" fill="none"/>
<path d="M9.0 78.4 l-1.5 2.6 M9.0 78.4 l1.8 2.3" stroke="#131914" stroke-width="1.2" fill="none"/>
<path d="M9.0 74.6 l-1.5 2.0 M9.0 74.6 l1.8 1.8" stroke="#131914" stroke-width="1.2" fill="none"/>
<path d="M9.0 96.0 Q13.1 79.9 16.5 77.8" stroke="#131914" stroke-width="2.4" fill="none" stroke-linecap="round"/>
<path d="M12.6 84.3 l-1.5 3.3 M12.6 84.3 l1.8 3.0" stroke="#131914" stroke-width="1.2" fill="none"/>
<path d="M14.1 81.0 l-1.5 2.6 M14.1 81.0 l1.8 2.3" stroke="#131914" stroke-width="1.2" fill="none"/>
<path d="M15.5 78.7 l-1.5 2.0 M15.5 78.7 l1.8 1.8" stroke="#131914" stroke-width="1.2" fill="none"/>
<path d="M9.0 96.0 Q15.0 85.2 19.9 87.9" stroke="#131914" stroke-width="2.4" fill="none" stroke-linecap="round"/>
<path d="M14.2 89.0 l-1.5 3.3 M14.2 89.0 l1.8 3.0" stroke="#131914" stroke-width="1.2" fill="none"/>
<path d="M16.3 87.7 l-1.5 2.6 M16.3 87.7 l1.8 2.3" stroke="#131914" stroke-width="1.2" fill="none"/>
<path d="M18.4 87.4 l-1.5 2.0 M18.4 87.4 l1.8 1.8" stroke="#131914" stroke-width="1.2" fill="none"/>
<path d="M9.0 96.0 Q18.6 86.1 26.5 94.2" stroke="#131914" stroke-width="2.4" fill="none" stroke-linecap="round"/>
<path d="M17.3 90.7 l-1.5 3.3 M17.3 90.7 l1.8 3.0" stroke="#131914" stroke-width="1.2" fill="none"/>
<path d="M20.8 90.7 l-1.5 2.6 M20.8 90.7 l1.8 2.3" stroke="#131914" stroke-width="1.2" fill="none"/>
<path d="M24.1 92.2 l-1.5 2.0 M24.1 92.2 l1.8 1.8" stroke="#131914" stroke-width="1.2" fill="none"/>
<path d="M9.0 96.0 Q20.9 89.0 30.7 102.5" stroke="#131914" stroke-width="2.4" fill="none" stroke-linecap="round"/>
<path d="M19.3 93.9 l-1.5 3.3 M19.3 93.9 l1.8 3.0" stroke="#131914" stroke-width="1.2" fill="none"/>
<path d="M23.6 95.6 l-1.5 2.6 M23.6 95.6 l1.8 2.3" stroke="#131914" stroke-width="1.2" fill="none"/>
<path d="M27.7 98.9 l-1.5 2.0 M27.7 98.9 l1.8 1.8" stroke="#131914" stroke-width="1.2" fill="none"/>
<path d="M9.0 96.0 Q21.8 92.9 32.2 110.6" stroke="#131914" stroke-width="2.4" fill="none" stroke-linecap="round"/>
<path d="M20.0 97.4 l-1.5 3.3 M20.0 97.4 l1.8 3.0" stroke="#131914" stroke-width="1.2" fill="none"/>
<path d="M24.6 100.8 l-1.5 2.6 M24.6 100.8 l1.8 2.3" stroke="#131914" stroke-width="1.2" fill="none"/>
<path d="M29.0 105.8 l-1.5 2.0 M29.0 105.8 l1.8 1.8" stroke="#131914" stroke-width="1.2" fill="none"/>
<path d="M9.0 96.0 Q20.7 96.9 30.3 116.5" stroke="#131914" stroke-width="2.4" fill="none" stroke-linecap="round"/>
<path d="M19.1 100.6 l-1.5 3.3 M19.1 100.6 l1.8 3.0" stroke="#131914" stroke-width="1.2" fill="none"/>
<path d="M23.3 105.1 l-1.5 2.6 M23.3 105.1 l1.8 2.3" stroke="#131914" stroke-width="1.2" fill="none"/>
<path d="M27.4 111.0 l-1.5 2.0 M27.4 111.0 l1.8 1.8" stroke="#131914" stroke-width="1.2" fill="none"/>
<circle cx="9" cy="96" r="5.3" fill="#131914"/>
<path d="M24.0 128.0 Q14.6 128.7 6.9 144.5" stroke="#131914" stroke-width="2.2" fill="none" stroke-linecap="round"/>
<path d="M15.9 131.7 l-1.5 3.3 M15.9 131.7 l1.8 3.0" stroke="#131914" stroke-width="1.2" fill="none"/>
<path d="M12.5 135.3 l-1.5 2.6 M12.5 135.3 l1.8 2.3" stroke="#131914" stroke-width="1.2" fill="none"/>
<path d="M9.3 140.1 l-1.5 2.0 M9.3 140.1 l1.8 1.8" stroke="#131914" stroke-width="1.2" fill="none"/>
<path d="M24.0 128.0 Q14.0 125.3 5.8 138.9" stroke="#131914" stroke-width="2.2" fill="none" stroke-linecap="round"/>
<path d="M15.4 128.9 l-1.5 3.3 M15.4 128.9 l1.8 3.0" stroke="#131914" stroke-width="1.2" fill="none"/>
<path d="M11.8 131.4 l-1.5 2.6 M11.8 131.4 l1.8 2.3" stroke="#131914" stroke-width="1.2" fill="none"/>
<path d="M8.3 135.2 l-1.5 2.0 M8.3 135.2 l1.8 1.8" stroke="#131914" stroke-width="1.2" fill="none"/>
<path d="M24.0 128.0 Q15.3 122.3 8.2 131.7" stroke="#131914" stroke-width="2.2" fill="none" stroke-linecap="round"/>
<path d="M16.5 125.9 l-1.5 3.3 M16.5 125.9 l1.8 3.0" stroke="#131914" stroke-width="1.2" fill="none"/>
<path d="M13.4 127.0 l-1.5 2.6 M13.4 127.0 l1.8 2.3" stroke="#131914" stroke-width="1.2" fill="none"/>
<path d="M10.4 129.2 l-1.5 2.0 M10.4 129.2 l1.8 1.8" stroke="#131914" stroke-width="1.2" fill="none"/>
<path d="M24.0 128.0 Q17.1 119.7 11.4 125.0" stroke="#131914" stroke-width="2.2" fill="none" stroke-linecap="round"/>
<path d="M18.0 123.3 l-1.5 3.3 M18.0 123.3 l1.8 3.0" stroke="#131914" stroke-width="1.2" fill="none"/>
<path d="M15.5 123.0 l-1.5 2.6 M15.5 123.0 l1.8 2.3" stroke="#131914" stroke-width="1.2" fill="none"/>
<path d="M13.2 123.7 l-1.5 2.0 M13.2 123.7 l1.8 1.8" stroke="#131914" stroke-width="1.2" fill="none"/>
<path d="M24.0 128.0 Q18.8 116.1 14.5 117.3" stroke="#131914" stroke-width="2.2" fill="none" stroke-linecap="round"/>
<path d="M19.5 119.9 l-1.5 3.3 M19.5 119.9 l1.8 3.0" stroke="#131914" stroke-width="1.2" fill="none"/>
<path d="M17.6 118.1 l-1.5 2.6 M17.6 118.1 l1.8 2.3" stroke="#131914" stroke-width="1.2" fill="none"/>
<path d="M15.8 117.2 l-1.5 2.0 M15.8 117.2 l1.8 1.8" stroke="#131914" stroke-width="1.2" fill="none"/>
<path d="M24.0 128.0 Q22.2 114.6 20.6 110.9" stroke="#131914" stroke-width="2.2" fill="none" stroke-linecap="round"/>
<path d="M22.4 117.9 l-1.5 3.3 M22.4 117.9 l1.8 3.0" stroke="#131914" stroke-width="1.2" fill="none"/>
<path d="M21.7 114.7 l-1.5 2.6 M21.7 114.7 l1.8 2.3" stroke="#131914" stroke-width="1.2" fill="none"/>
<path d="M21.1 112.3 l-1.5 2.0 M21.1 112.3 l1.8 1.8" stroke="#131914" stroke-width="1.2" fill="none"/>
<path d="M24.0 128.0 Q25.9 114.4 27.4 110.7" stroke="#131914" stroke-width="2.2" fill="none" stroke-linecap="round"/>
<path d="M25.6 117.7 l-1.5 3.3 M25.6 117.7 l1.8 3.0" stroke="#131914" stroke-width="1.2" fill="none"/>
<path d="M26.3 114.5 l-1.5 2.6 M26.3 114.5 l1.8 2.3" stroke="#131914" stroke-width="1.2" fill="none"/>
<path d="M27.0 112.0 l-1.5 2.0 M27.0 112.0 l1.8 1.8" stroke="#131914" stroke-width="1.2" fill="none"/>
<path d="M24.0 128.0 Q29.1 116.5 33.2 117.6" stroke="#131914" stroke-width="2.2" fill="none" stroke-linecap="round"/>
<path d="M28.4 120.2 l-1.5 3.3 M28.4 120.2 l1.8 3.0" stroke="#131914" stroke-width="1.2" fill="none"/>
<path d="M30.2 118.4 l-1.5 2.6 M30.2 118.4 l1.8 2.3" stroke="#131914" stroke-width="1.2" fill="none"/>
<path d="M31.9 117.5 l-1.5 2.0 M31.9 117.5 l1.8 1.8" stroke="#131914" stroke-width="1.2" fill="none"/>
<path d="M24.0 128.0 Q31.0 119.7 36.7 125.0" stroke="#131914" stroke-width="2.2" fill="none" stroke-linecap="round"/>
<path d="M30.0 123.3 l-1.5 3.3 M30.0 123.3 l1.8 3.0" stroke="#131914" stroke-width="1.2" fill="none"/>
<path d="M32.5 122.9 l-1.5 2.6 M32.5 122.9 l1.8 2.3" stroke="#131914" stroke-width="1.2" fill="none"/>
<path d="M34.9 123.7 l-1.5 2.0 M34.9 123.7 l1.8 1.8" stroke="#131914" stroke-width="1.2" fill="none"/>
<path d="M24.0 128.0 Q33.7 121.6 41.7 132.2" stroke="#131914" stroke-width="2.2" fill="none" stroke-linecap="round"/>
<path d="M32.4 125.7 l-1.5 3.3 M32.4 125.7 l1.8 3.0" stroke="#131914" stroke-width="1.2" fill="none"/>
<path d="M35.9 126.9 l-1.5 2.6 M35.9 126.9 l1.8 2.3" stroke="#131914" stroke-width="1.2" fill="none"/>
<path d="M39.3 129.4 l-1.5 2.0 M39.3 129.4 l1.8 1.8" stroke="#131914" stroke-width="1.2" fill="none"/>
<path d="M24.0 128.0 Q34.3 125.2 42.7 139.2" stroke="#131914" stroke-width="2.2" fill="none" stroke-linecap="round"/>
<path d="M32.9 128.9 l-1.5 3.3 M32.9 128.9 l1.8 3.0" stroke="#131914" stroke-width="1.2" fill="none"/>
<path d="M36.6 131.5 l-1.5 2.6 M36.6 131.5 l1.8 2.3" stroke="#131914" stroke-width="1.2" fill="none"/>
<path d="M40.1 135.4 l-1.5 2.0 M40.1 135.4 l1.8 1.8" stroke="#131914" stroke-width="1.2" fill="none"/>
<path d="M24.0 128.0 Q33.1 128.7 40.5 143.9" stroke="#131914" stroke-width="2.2" fill="none" stroke-linecap="round"/>
<path d="M31.8 131.5 l-1.5 3.3 M31.8 131.5 l1.8 3.0" stroke="#131914" stroke-width="1.2" fill="none"/>
<path d="M35.1 135.0 l-1.5 2.6 M35.1 135.0 l1.8 2.3" stroke="#131914" stroke-width="1.2" fill="none"/>
<path d="M38.2 139.7 l-1.5 2.0 M38.2 139.7 l1.8 1.8" stroke="#131914" stroke-width="1.2" fill="none"/>
<circle cx="24" cy="128" r="4.4" fill="#131914"/>
<path d="M6.0 150.0 Q-3.4 150.7 -11.1 168.2" stroke="#131914" stroke-width="2.4" fill="none" stroke-linecap="round"/>
<path d="M-2.1 154.0 l-1.5 3.3 M-2.1 154.0 l1.8 3.0" stroke="#131914" stroke-width="1.2" fill="none"/>
<path d="M-5.5 158.0 l-1.5 2.6 M-5.5 158.0 l1.8 2.3" stroke="#131914" stroke-width="1.2" fill="none"/>
<path d="M-8.7 163.3 l-1.5 2.0 M-8.7 163.3 l1.8 1.8" stroke="#131914" stroke-width="1.2" fill="none"/>
<path d="M6.0 150.0 Q-3.2 146.8 -10.7 160.4" stroke="#131914" stroke-width="2.4" fill="none" stroke-linecap="round"/>
<path d="M-1.9 150.5 l-1.5 3.3 M-1.9 150.5 l1.8 3.0" stroke="#131914" stroke-width="1.2" fill="none"/>
<path d="M-5.2 152.9 l-1.5 2.6 M-5.2 152.9 l1.8 2.3" stroke="#131914" stroke-width="1.2" fill="none"/>
<path d="M-8.4 156.7 l-1.5 2.0 M-8.4 156.7 l1.8 1.8" stroke="#131914" stroke-width="1.2" fill="none"/>
<path d="M6.0 150.0 Q-2.5 142.6 -9.5 152.3" stroke="#131914" stroke-width="2.4" fill="none" stroke-linecap="round"/>
<path d="M-1.4 146.8 l-1.5 3.3 M-1.4 146.8 l1.8 3.0" stroke="#131914" stroke-width="1.2" fill="none"/>
<path d="M-4.5 147.6 l-1.5 2.6 M-4.5 147.6 l1.8 2.3" stroke="#131914" stroke-width="1.2" fill="none"/>
<path d="M-7.4 149.8 l-1.5 2.0 M-7.4 149.8 l1.8 1.8" stroke="#131914" stroke-width="1.2" fill="none"/>
<path d="M6.0 150.0 Q0.4 139.9 -4.2 143.5" stroke="#131914" stroke-width="2.4" fill="none" stroke-linecap="round"/>
<path d="M1.2 143.7 l-1.5 3.3 M1.2 143.7 l1.8 3.0" stroke="#131914" stroke-width="1.2" fill="none"/>
<path d="M-0.8 142.7 l-1.5 2.6 M-0.8 142.7 l1.8 2.3" stroke="#131914" stroke-width="1.2" fill="none"/>
<path d="M-2.8 142.7 l-1.5 2.0 M-2.8 142.7 l1.8 1.8" stroke="#131914" stroke-width="1.2" fill="none"/>
<path d="M6.0 150.0 Q4.2 139.5 2.8 137.3" stroke="#131914" stroke-width="2.4" fill="none" stroke-linecap="round"/>
<path d="M4.5 142.2 l-1.5 3.3 M4.5 142.2 l1.8 3.0" stroke="#131914" stroke-width="1.2" fill="none"/>
<path d="M3.8 139.9 l-1.5 2.6 M3.8 139.9 l1.8 2.3" stroke="#131914" stroke-width="1.2" fill="none"/>
<path d="M3.2 138.2 l-1.5 2.0 M3.2 138.2 l1.8 1.8" stroke="#131914" stroke-width="1.2" fill="none"/>
<path d="M6.0 150.0 Q7.9 138.5 9.5 136.2" stroke="#131914" stroke-width="2.4" fill="none" stroke-linecap="round"/>
<path d="M7.7 141.5 l-1.5 3.3 M7.7 141.5 l1.8 3.0" stroke="#131914" stroke-width="1.2" fill="none"/>
<path d="M8.4 138.9 l-1.5 2.6 M8.4 138.9 l1.8 2.3" stroke="#131914" stroke-width="1.2" fill="none"/>
<path d="M9.0 137.1 l-1.5 2.0 M9.0 137.1 l1.8 1.8" stroke="#131914" stroke-width="1.2" fill="none"/>
<path d="M6.0 150.0 Q11.5 140.2 15.9 143.6" stroke="#131914" stroke-width="2.4" fill="none" stroke-linecap="round"/>
<path d="M10.7 143.8 l-1.5 3.3 M10.7 143.8 l1.8 3.0" stroke="#131914" stroke-width="1.2" fill="none"/>
<path d="M12.7 142.8 l-1.5 2.6 M12.7 142.8 l1.8 2.3" stroke="#131914" stroke-width="1.2" fill="none"/>
<path d="M14.6 142.9 l-1.5 2.0 M14.6 142.9 l1.8 1.8" stroke="#131914" stroke-width="1.2" fill="none"/>
<path d="M6.0 150.0 Q15.6 141.7 23.5 152.6" stroke="#131914" stroke-width="2.4" fill="none" stroke-linecap="round"/>
<path d="M14.3 146.4 l-1.5 3.3 M14.3 146.4 l1.8 3.0" stroke="#131914" stroke-width="1.2" fill="none"/>
<path d="M17.7 147.3 l-1.5 2.6 M17.7 147.3 l1.8 2.3" stroke="#131914" stroke-width="1.2" fill="none"/>
<path d="M21.1 149.8 l-1.5 2.0 M21.1 149.8 l1.8 1.8" stroke="#131914" stroke-width="1.2" fill="none"/>
<path d="M6.0 150.0 Q15.5 146.6 23.4 160.8" stroke="#131914" stroke-width="2.4" fill="none" stroke-linecap="round"/>
<path d="M14.2 150.5 l-1.5 3.3 M14.2 150.5 l1.8 3.0" stroke="#131914" stroke-width="1.2" fill="none"/>
<path d="M17.7 153.0 l-1.5 2.6 M17.7 153.0 l1.8 2.3" stroke="#131914" stroke-width="1.2" fill="none"/>
<path d="M21.0 156.9 l-1.5 2.0 M21.0 156.9 l1.8 1.8" stroke="#131914" stroke-width="1.2" fill="none"/>
<path d="M6.0 150.0 Q14.7 150.6 21.8 166.8" stroke="#131914" stroke-width="2.4" fill="none" stroke-linecap="round"/>
<path d="M13.5 153.7 l-1.5 3.3 M13.5 153.7 l1.8 3.0" stroke="#131914" stroke-width="1.2" fill="none"/>
<path d="M16.6 157.4 l-1.5 2.6 M16.6 157.4 l1.8 2.3" stroke="#131914" stroke-width="1.2" fill="none"/>
<path d="M19.6 162.3 l-1.5 2.0 M19.6 162.3 l1.8 1.8" stroke="#131914" stroke-width="1.2" fill="none"/>
<circle cx="6" cy="150" r="4.4" fill="#131914"/>
<path d="M0 100 Q8 104 12 122 Q20 132 26 150 Q30 170 34 207.5 H0 Z" fill="#17130f" opacity="0.93"/>
<circle cx="12.8" cy="168.1" r="7" fill="url(#glowO)"/>
<circle cx="56.6" cy="168.7" r="4" fill="url(#glowO)"/>
<circle cx="126.9" cy="177.3" r="5" fill="url(#glowO)"/>
<circle cx="168.0" cy="187.0" r="3.5" fill="url(#glowW)"/>
<circle cx="179.2" cy="178.4" r="4" fill="url(#glowO)"/>
<circle cx="217.6" cy="181.1" r="3.5" fill="url(#glowO)"/>
<circle cx="322.5" cy="178.4" r="3.5" fill="url(#glowW)"/>
<circle cx="347.4" cy="176.2" r="3.5" fill="url(#glowW)"/>
<circle cx="12.8" cy="175.5" r="3" fill="url(#glowW)"/>
<circle cx="288" cy="182.7" r="1.8" fill="#ff2a3a"/>
<path d="M5.8 168.1 H19.8 M12.8 161 V175 M8 163.3 L17.6 172.9 M17.6 163.3 L8 172.9" stroke="#ffb040" stroke-width="0.6" opacity="0.8"/>
<circle cx="69.5" cy="72.2" r="2.25" fill="#f2b534"/>
<circle cx="74.8" cy="72.2" r="2.25" fill="#f2b534"/>
<circle cx="80.1" cy="72.2" r="2.25" fill="#f2b534"/>
<circle cx="85.4" cy="72.2" r="2.25" fill="#f2b534"/>
<circle cx="90.7" cy="72.2" r="2.25" fill="#f2b534"/>
<circle cx="96.0" cy="72.2" r="2.25" fill="#f2b534"/>
<circle cx="101.3" cy="72.2" r="2.25" fill="#f2b534"/>
<circle cx="106.6" cy="72.2" r="2.25" fill="#f2b534"/>
<circle cx="111.9" cy="72.2" r="2.25" fill="#f2b534"/>
<circle cx="117.2" cy="72.2" r="2.25" fill="#f2b534"/>
<circle cx="122.5" cy="72.2" r="2.25" fill="#f2b534"/>
<circle cx="127.8" cy="72.2" r="2.25" fill="#f2b534"/>
<circle cx="64.2" cy="77.5" r="2.25" fill="#f2b534"/>
<circle cx="69.5" cy="77.5" r="2.25" fill="#f2b534"/>
<circle cx="74.8" cy="77.5" r="2.25" fill="#f2b534"/>
<circle cx="80.1" cy="77.5" r="2.25" fill="#f2b534"/>
<circle cx="85.4" cy="77.5" r="2.25" fill="#f2b534"/>
<circle cx="90.7" cy="77.5" r="2.25" fill="#f2b534"/>
<circle cx="96.0" cy="77.5" r="2.25" fill="#f2b534"/>
<circle cx="101.3" cy="77.5" r="2.25" fill="#f2b534"/>
<circle cx="106.6" cy="77.5" r="2.25" fill="#f2b534"/>
<circle cx="111.9" cy="77.5" r="2.25" fill="#f2b534"/>
<circle cx="117.2" cy="77.5" r="2.25" fill="#f2b534"/>
<circle cx="122.5" cy="77.5" r="2.25" fill="#f2b534"/>
<circle cx="58.9" cy="82.9" r="2.25" fill="#f2b534"/>
<circle cx="64.2" cy="82.9" r="2.25" fill="#f2b534"/>
<circle cx="69.5" cy="82.9" r="2.25" fill="#f2b534"/>
<circle cx="74.8" cy="82.9" r="2.25" fill="#f2b534"/>
<circle cx="80.1" cy="82.9" r="2.25" fill="#f2b534"/>
<circle cx="85.4" cy="82.9" r="2.25" fill="#f2b534"/>
<circle cx="90.7" cy="82.9" r="2.25" fill="#f2b534"/>
<circle cx="96.0" cy="82.9" r="2.25" fill="#f2b534"/>
<circle cx="101.3" cy="82.9" r="2.25" fill="#f2b534"/>
<circle cx="106.6" cy="82.9" r="2.25" fill="#f2b534"/>
<circle cx="111.9" cy="82.9" r="2.25" fill="#f2b534"/>
<circle cx="117.2" cy="82.9" r="2.25" fill="#f2b534"/>
<circle cx="53.6" cy="88.2" r="2.25" fill="#f2b534"/>
<circle cx="58.9" cy="88.2" r="2.25" fill="#f2b534"/>
<circle cx="64.2" cy="88.2" r="2.25" fill="#f2b534"/>
<circle cx="69.5" cy="88.2" r="2.25" fill="#f2b534"/>
<circle cx="74.8" cy="88.2" r="2.25" fill="#f2b534"/>
<circle cx="80.1" cy="88.2" r="2.25" fill="#f2b534"/>
<circle cx="85.4" cy="88.2" r="2.25" fill="#f2b534"/>
<circle cx="90.7" cy="88.2" r="2.25" fill="#f2b534"/>
<circle cx="96.0" cy="88.2" r="2.25" fill="#f2b534"/>
<circle cx="101.3" cy="88.2" r="2.25" fill="#f2b534"/>
<circle cx="106.6" cy="88.2" r="2.25" fill="#f2b534"/>
<circle cx="111.9" cy="88.2" r="2.25" fill="#f2b534"/>
<circle cx="48.3" cy="93.6" r="2.25" fill="#f2b534"/>
<circle cx="53.6" cy="93.6" r="2.25" fill="#f2b534"/>
<circle cx="58.9" cy="93.6" r="2.25" fill="#f2b534"/>
<circle cx="64.2" cy="93.6" r="2.25" fill="#f2b534"/>
<circle cx="69.5" cy="93.6" r="2.25" fill="#f2b534"/>
<circle cx="74.8" cy="93.6" r="2.25" fill="#f2b534"/>
<circle cx="80.1" cy="93.6" r="2.25" fill="#f2b534"/>
<circle cx="85.4" cy="93.6" r="2.25" fill="#f2b534"/>
<circle cx="90.7" cy="93.6" r="2.25" fill="#f2b534"/>
<circle cx="96.0" cy="93.6" r="2.25" fill="#f2b534"/>
<circle cx="101.3" cy="93.6" r="2.25" fill="#f2b534"/>
<circle cx="106.6" cy="93.6" r="2.25" fill="#f2b534"/>
<circle cx="53.6" cy="98.9" r="2.25" fill="#f2b534"/>
<circle cx="58.9" cy="98.9" r="2.25" fill="#f2b534"/>
<circle cx="64.2" cy="98.9" r="2.25" fill="#f2b534"/>
<circle cx="69.5" cy="98.9" r="2.25" fill="#f2b534"/>
<circle cx="74.8" cy="98.9" r="2.25" fill="#f2b534"/>
<circle cx="80.1" cy="98.9" r="2.25" fill="#f2b534"/>
<circle cx="85.4" cy="98.9" r="2.25" fill="#f2b534"/>
<circle cx="90.7" cy="98.9" r="2.25" fill="#f2b534"/>
<circle cx="96.0" cy="98.9" r="2.25" fill="#f2b534"/>
<circle cx="101.3" cy="98.9" r="2.25" fill="#f2b534"/>
<circle cx="106.6" cy="98.9" r="2.25" fill="#f2b534"/>
<circle cx="111.9" cy="98.9" r="2.25" fill="#f2b534"/>
<circle cx="58.9" cy="104.2" r="2.25" fill="#f2b534"/>
<circle cx="64.2" cy="104.2" r="2.25" fill="#f2b534"/>
<circle cx="69.5" cy="104.2" r="2.25" fill="#f2b534"/>
<circle cx="74.8" cy="104.2" r="2.25" fill="#f2b534"/>
<circle cx="80.1" cy="104.2" r="2.25" fill="#f2b534"/>
<circle cx="85.4" cy="104.2" r="2.25" fill="#f2b534"/>
<circle cx="90.7" cy="104.2" r="2.25" fill="#f2b534"/>
<circle cx="96.0" cy="104.2" r="2.25" fill="#f2b534"/>
<circle cx="101.3" cy="104.2" r="2.25" fill="#f2b534"/>
<circle cx="106.6" cy="104.2" r="2.25" fill="#f2b534"/>
<circle cx="111.9" cy="104.2" r="2.25" fill="#f2b534"/>
<circle cx="117.2" cy="104.2" r="2.25" fill="#f2b534"/>
<circle cx="64.2" cy="109.6" r="2.25" fill="#f2b534"/>
<circle cx="69.5" cy="109.6" r="2.25" fill="#f2b534"/>
<circle cx="74.8" cy="109.6" r="2.25" fill="#f2b534"/>
<circle cx="80.1" cy="109.6" r="2.25" fill="#f2b534"/>
<circle cx="85.4" cy="109.6" r="2.25" fill="#f2b534"/>
<circle cx="90.7" cy="109.6" r="2.25" fill="#f2b534"/>
<circle cx="96.0" cy="109.6" r="2.25" fill="#f2b534"/>
<circle cx="101.3" cy="109.6" r="2.25" fill="#f2b534"/>
<circle cx="106.6" cy="109.6" r="2.25" fill="#f2b534"/>
<circle cx="111.9" cy="109.6" r="2.25" fill="#f2b534"/>
<circle cx="117.2" cy="109.6" r="2.25" fill="#f2b534"/>
<circle cx="122.5" cy="109.6" r="2.25" fill="#f2b534"/>
<circle cx="69.5" cy="114.9" r="2.25" fill="#f2b534"/>
<circle cx="74.8" cy="114.9" r="2.25" fill="#f2b534"/>
<circle cx="80.1" cy="114.9" r="2.25" fill="#f2b534"/>
<circle cx="85.4" cy="114.9" r="2.25" fill="#f2b534"/>
<circle cx="90.7" cy="114.9" r="2.25" fill="#f2b534"/>
<circle cx="96.0" cy="114.9" r="2.25" fill="#f2b534"/>
<circle cx="101.3" cy="114.9" r="2.25" fill="#f2b534"/>
<circle cx="106.6" cy="114.9" r="2.25" fill="#f2b534"/>
<circle cx="111.9" cy="114.9" r="2.25" fill="#f2b534"/>
<circle cx="117.2" cy="114.9" r="2.25" fill="#f2b534"/>
<circle cx="122.5" cy="114.9" r="2.25" fill="#f2b534"/>
<circle cx="127.8" cy="114.9" r="2.25" fill="#f2b534"/>
<text x="53.3" y="58.3" font-size="43.9" font-weight="bold" font-style="italic" fill="#fff" stroke="#fff" stroke-width="2" stroke-linejoin="round" textLength="261.5" lengthAdjust="spacingAndGlyphs">PRODUCTION</text>
<text x="139.3" y="115.9" font-size="57.1" font-weight="bold" font-style="italic" fill="#fff" stroke="#fff" stroke-width="2.6" stroke-linejoin="round" textLength="166.3" lengthAdjust="spacingAndGlyphs">ALERT</text>
</g></svg>

<span class="t" style="left:365.00px;top:153px;font-size:14px;color:#fff;font-weight:bold;transform:scaleX(0.9643);">About Us</span>
<span class="t" style="left:479.00px;top:153px;font-size:14px;color:#fff;font-weight:bold;transform:scaleX(0.9476);">For Filmmakers</span>
<span class="t" style="left:608.00px;top:153px;font-size:14px;color:#fff;font-weight:bold;transform:scaleX(0.9390);">For Communities</span>
<span class="t" style="left:746.70px;top:153px;font-size:14px;color:#fff;font-weight:bold;transform:scaleX(0.9732);">News</span>
<span class="t" style="left:836.70px;top:153px;font-size:14px;color:#fff;font-weight:bold;transform:scaleX(0.9674);">MyFilmLA</span>
<span class="t" style="left:232.33px;top:160px;font-size:54px;color:#10111a;font-weight:bold;transform:scaleX(0.9653);z-index:1;-webkit-text-stroke:1.2px #10111a;">Search Results</span>
<span class="t" style="left:254.20px;top:270px;font-size:18px;color:#2a2b33;transform:scaleX(1.0294);">filming</span>
<span class="t" style="left:232.66px;top:340px;font-size:17px;color:#10111a;font-weight:bold;transform:scaleX(0.9916);">RESULTS: 1 - 2 OF 2</span>
<span class="t" style="left:232.71px;top:455px;font-size:20.3px;color:#10111a;font-weight:bold;transform:scaleX(1.0904);-webkit-text-stroke:0.5px #10111a;">Filter Results</span>
<span class="t" style="left:246.10px;top:544px;font-size:16.5px;color:#1d1e26;transform:scaleX(1.0681);">All News Categories</span>
<span class="t" style="left:694.32px;top:544px;font-size:16.5px;color:#d4d4d4;transform:scaleX(1.0838);">Date</span>
<span class="t" style="left:254.84px;top:596px;font-size:16.5px;color:#1d1e26;transform:scaleX(1.0563);">Everything</span>
<span class="t" style="left:376.45px;top:596px;font-size:16.5px;color:#1d1e26;transform:scaleX(1.0540);">News (2)</span>
<span class="t" style="left:938.50px;top:600px;font-size:17.5px;color:#fff;font-weight:bold;transform:scaleX(0.9483);">CLEAR</span>
<span class="t" style="left:663.90px;top:705px;font-size:16.5px;color:#1d1e26;transform:scaleX(1.0486);">NEWS:</span>
<span class="t" style="left:723.97px;top:705px;font-size:16.5px;color:#1e97d2;transform:scaleX(1.0259);"><a style="color:#1e97d2;text-decoration:underline">PRODUCTION ALERTS</a></span>
<span class="t" style="left:918.00px;top:705px;font-size:16.5px;color:#1d1e26;">|</span>
<span class="t" style="left:930.00px;top:705px;font-size:16.5px;color:#1d1e26;transform:scaleX(1.0475);">JUNE 11, 2025</span>
<span class="t" style="left:663.76px;top:749px;font-size:33px;color:#10111a;font-weight:bold;transform:scaleX(1.0702);-webkit-text-stroke:0.5px #10111a;">Filming in The Port of Los Angeles Restricted During</span>
<span class="t" style="left:663.68px;top:790px;font-size:33px;color:#10111a;font-weight:bold;transform:scaleX(1.1124);-webkit-text-stroke:0.5px #10111a;">Fleet Week 2025</span>
<span class="t" style="left:664.03px;top:850px;font-size:16.5px;color:#2a2b33;transform:scaleX(1.0691);">LA Fleet Week hosts a variety of activities for visiting military personnel and the general public. This six-day celebration will</span>
<span class="t" style="left:664.80px;top:877px;font-size:16.5px;color:#2a2b33;transform:scaleX(1.0638);">feature active-duty ship tours, educational sessions, military displays and equipment demonstrations, military aircraft flyovers,</span>
<span class="t" style="left:665.00px;top:905px;font-size:16.5px;color:#2a2b33;transform:scaleX(1.0171);">and much... &gt;&gt;</span>
<span class="t" style="left:776.36px;top:905px;font-size:16.5px;color:#1e97d2;transform:scaleX(1.0423);"><a style="color:#1e97d2;text-decoration:underline">Read more</a></span>
<span class="t" style="left:270.48px;top:145px;font-size:15.2px;color:#fff;font-weight:bold;transform:scaleX(1.0163);">Film</span>
<span class="t" style="left:279.62px;top:158px;font-size:22.6px;color:#fff;font-weight:bold;transform:scaleX(0.9826);">LA</span>

</body>
</html>
